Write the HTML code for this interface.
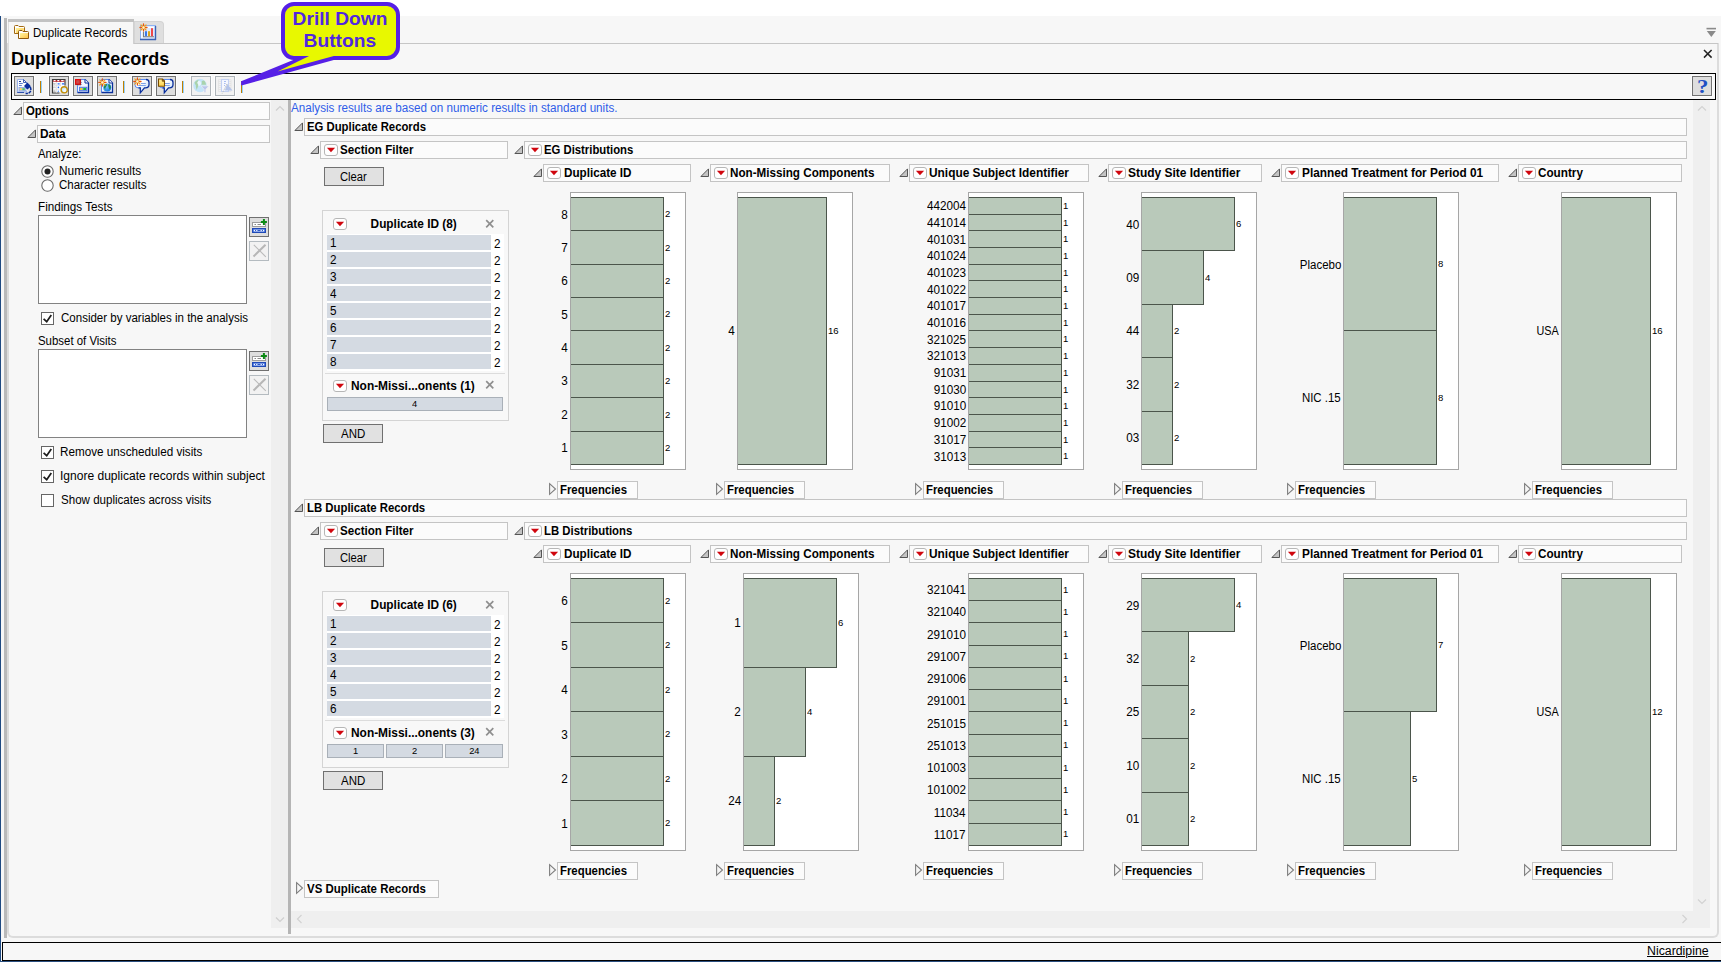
<!DOCTYPE html>
<html><head><meta charset="utf-8"><title>Duplicate Records</title>
<style>
html,body{margin:0;padding:0;}
body{width:1721px;height:962px;position:relative;overflow:hidden;background:#fff;font-family:"Liberation Sans", sans-serif;}
.a{position:absolute;box-sizing:content-box;}
.t{position:absolute;white-space:nowrap;display:inline-block;}
svg.a{overflow:visible;}
</style></head><body>
<div class="a" style="left:0px;top:0px;width:1721px;height:16px;background:#fff;"></div><div class="a" style="left:0px;top:16px;width:1721px;height:946px;background:#f7f7f7;"></div><div class="a" style="left:0px;top:16px;width:1px;height:946px;background:#1f4a82;"></div><div class="a" style="left:0px;top:961px;width:1721px;height:1px;background:#2a4f80;"></div><div class="a" style="left:4px;top:18px;width:3px;height:920px;background:#b9b9b9;"></div><div class="a" style="left:7px;top:43px;width:1712px;height:895px;border:2px solid #dcdcdc;border-top:none;border-radius:0 0 6px 6px;box-sizing:border-box"></div><div class="a" style="left:134px;top:43px;width:1584px;height:1px;background:#c6c6c6;"></div><div class="a" style="left:8px;top:19px;width:126px;height:3px;background:#c2c2c2;"></div><div class="a" style="left:8px;top:22px;width:1px;height:21px;background:#dedede;"></div><div class="a" style="left:133px;top:22px;width:1px;height:22px;background:#d0d0d0;"></div><div class="a" style="left:134px;top:21px;width:30px;height:22px;background:#dfdfdf;border:1px solid #d4d4d4;border-bottom:none;border-radius:0 4px 0 0;box-sizing:border-box"></div><span class="t" style="left:32.70px;top:26.00px;font-size:12px;line-height:14px;color:#000;transform:scaleX(0.9618);transform-origin:left center;">Duplicate Records</span><span class="t" style="left:10.90px;top:49.00px;font-size:18.2px;line-height:20px;color:#000;font-weight:bold;transform:scaleX(0.9912);transform-origin:left center;">Duplicate Records</span><svg class="a" style="left:1706px;top:27px" width="11" height="11" viewBox="0 0 11 11"><rect x="0.5" y="0.8" width="9.5" height="1.6" fill="#8a8a8a"/><path d="M0.8 4 L9.8 4 L5.3 10 Z" fill="#8a8a8a"/></svg><svg class="a" style="left:1703px;top:49px" width="10" height="10" viewBox="0 0 10 10"><path d="M1 1 L8.6 8.6 M8.6 1 L1 8.6" stroke="#222" stroke-width="1.5" fill="none"/></svg><div class="a" style="left:11px;top:73px;width:1703px;height:25px;border:1px solid #000;"></div><div class="a" style="left:14px;top:76px;width:18px;height:18px;background:#dedede;border:1px solid #727272;box-shadow:0 0 0 1px #fdfdfd;"></div><div class="a" style="left:49px;top:76px;width:18px;height:18px;background:#dedede;border:1px solid #727272;box-shadow:0 0 0 1px #fdfdfd;"></div><div class="a" style="left:73px;top:76px;width:18px;height:18px;background:#dedede;border:1px solid #727272;box-shadow:0 0 0 1px #fdfdfd;"></div><div class="a" style="left:97px;top:76px;width:18px;height:18px;background:#dedede;border:1px solid #727272;box-shadow:0 0 0 1px #fdfdfd;"></div><div class="a" style="left:132px;top:76px;width:18px;height:18px;background:#dedede;border:1px solid #727272;box-shadow:0 0 0 1px #fdfdfd;"></div><div class="a" style="left:156px;top:76px;width:18px;height:18px;background:#dedede;border:1px solid #727272;box-shadow:0 0 0 1px #fdfdfd;"></div><div class="a" style="left:191px;top:76px;width:18px;height:18px;background:#f2f2f2;border:1px solid #aeb4b9;box-shadow:0 0 0 1px #fdfdfd;"></div><div class="a" style="left:215px;top:76px;width:18px;height:18px;background:#f2f2f2;border:1px solid #aeb4b9;box-shadow:0 0 0 1px #fdfdfd;"></div><div class="a" style="left:40px;top:81px;width:1px;height:12px;background:#c17f00;"></div><div class="a" style="left:41px;top:81px;width:1px;height:12px;background:#8fd0ff;"></div><div class="a" style="left:123px;top:81px;width:1px;height:12px;background:#c17f00;"></div><div class="a" style="left:124px;top:81px;width:1px;height:12px;background:#8fd0ff;"></div><div class="a" style="left:182px;top:81px;width:1px;height:12px;background:#c17f00;"></div><div class="a" style="left:183px;top:81px;width:1px;height:12px;background:#8fd0ff;"></div><div class="a" style="left:241px;top:81px;width:1px;height:12px;background:#c17f00;"></div><div class="a" style="left:242px;top:81px;width:1px;height:12px;background:#8fd0ff;"></div><div class="a" style="left:1692px;top:76px;width:18px;height:18px;background:#dedede;border:1px solid #727272;box-shadow:0 0 0 1px #fdfdfd;"></div><svg class="a" style="left:13px;top:24px" width="18" height="16" viewBox="0 0 18 16"><defs><linearGradient id="fg" x1="0" y1="0" x2="1" y2="1"><stop offset="0" stop-color="#fff7a0"/><stop offset="1" stop-color="#ffc24a"/></linearGradient></defs><path d="M1.5 9.5 V2.5 Q1.5 1.5 2.5 1.5 H5 L6 2.5 H10.5 Q11.5 2.5 11.5 3.5 V9.5 Z" fill="#fff" stroke="#a36a12" stroke-width="1"/><rect x="2.8" y="4" width="8" height="5" fill="url(#fg)"/><path d="M5.5 14.5 V7.5 Q5.5 6.5 6.5 6.5 H9 L10 7.5 H14.5 Q15.5 7.5 15.5 8.5 V14.5 Z" fill="#fff" stroke="#8f5a0c" stroke-width="1"/><rect x="7" y="9" width="8" height="5" fill="url(#fg)"/></svg><svg class="a" style="left:139px;top:22px" width="20" height="20" viewBox="0 0 20 20"><rect x="1.5" y="3.5" width="15" height="14" fill="#dfeaff" stroke="#8eb2f2" stroke-width="1"/><path d="M1 17.5 H17 M16.5 4 V18" stroke="#3a62b4" stroke-width="1.4" fill="none"/><rect x="2.5" y="4.8" width="12.5" height="1.2" fill="#fff"/><rect x="2.3" y="5" width="1.2" height="11" fill="#fff"/><path d="M4.5 10 V14.7 H15" stroke="#7d7d7d" stroke-width="1.1" fill="none"/><rect x="6" y="9.2" width="2" height="5" fill="#3a78e8"/><rect x="9" y="9.2" width="2" height="5" fill="#d8a41a"/><rect x="12" y="6.2" width="2" height="8" fill="#f04848"/><path d="M4.5 2.0 V9.0 M1.0 5.5 H8.0" stroke="#e8590c" stroke-width="1.3" stroke-linecap="round"/><path d="M1.98 2.98 L7.02 8.02 M7.02 2.98 L1.98 8.02" stroke="#f0a21a" stroke-width="1.2" stroke-linecap="round"/><circle cx="4.5" cy="5.5" r="1.2" fill="#fff3d0"/></svg><svg class="a" style="left:14px;top:76px" width="20" height="20" viewBox="0 0 20 20"><path d="M3.5 3.5 H9.5 L12.5 6.5 V16 H3.5 Z" fill="#fafcff" stroke="#9db4ea" stroke-width="1"/><path d="M9.5 3.5 V6.5 H12.5 Z" fill="#fff" stroke="#2a4fae" stroke-width="0.9"/><path d="M5 5.5 H7" stroke="#1f3f9c" stroke-width="1"/><path d="M5 7.5 H8.8 M5 9.5 H7.8" stroke="#5d7fcc" stroke-width="1"/><rect x="5" y="11.4" width="6.5" height="3.6" fill="#b9caf2" stroke="#8aa4e2" stroke-width="0.8"/><rect x="5.8" y="12.2" width="2" height="2" fill="#ffd84a"/><rect x="8.4" y="12.2" width="2.4" height="2" fill="#56c060"/><path d="M3.2 16.5 H10" stroke="#2a4fae" stroke-width="1"/><path d="M10 10 L13.4 6.6 L16.3 9.6 L16.3 11 L13.4 13.4 Z" fill="#0a2f9c"/><path d="M16.2 10.8 Q17.6 14.2 16 16 Q14.4 17.6 11.6 17.4" fill="none" stroke="#0a2f9c" stroke-width="1.5" stroke-dasharray="3.2 0.8"/><path d="M11.6 13.2 L14.4 15.6" stroke="#fff" stroke-width="0.9"/></svg><svg class="a" style="left:49px;top:76px" width="20" height="20" viewBox="0 0 20 20"><rect x="3.5" y="3.5" width="12.5" height="13.5" fill="#fff" stroke="#d6d6d6" stroke-width="0.8"/><path d="M3.5 3 V17 H10.5" fill="none" stroke="#3c3c3c" stroke-width="1.2"/><path d="M3 3.5 H16 V9.5" fill="none" stroke="#3c3c3c" stroke-width="1.1"/><rect x="4.2" y="4" width="11.3" height="1.9" fill="#b4242c"/><path d="M4.8 4 V5.2 H6.6 V4 M8.3 4 V5.2 H10.3 V4 M12.2 4 V5.2 H14.6 V4" fill="#fff" stroke="none"/><path d="M7.4 6 V17 M11.4 6 V10" stroke="#d9d9d9" stroke-width="0.7"/><path d="M4 9.6 H12 M4 13.2 H10.5" stroke="#d9d9d9" stroke-width="0.7"/><path d="M4.6 7.8 H6.3 M4.6 11.4 H6.3 M4.6 15.2 H6.3" stroke="#8c8c8c" stroke-width="1.4"/><path d="M4.9 7.8 H6 M4.9 11.4 H6 M4.9 15.2 H6" stroke="#fff" stroke-width="0.7"/><path d="M8.6 7.8 H10.6 M12.9 7.8 H15.2" stroke="#1a68ff" stroke-width="1.3"/><circle cx="9.4" cy="11.4" r="0.8" fill="#1a68ff"/><circle cx="9.3" cy="15.2" r="0.7" fill="#4a8cff"/><circle cx="15.2" cy="13.8" r="3.1" fill="#c9ecff" stroke="#c48f08" stroke-width="1.4"/><circle cx="15.8" cy="14.5" r="1.5" fill="#fff" opacity="0.85"/></svg><svg class="a" style="left:73px;top:76px" width="20" height="20" viewBox="0 0 20 20"><path d="M4.5 3.5 H12.0 L15.5 7.0 V16.5 H4.5 Z" fill="#f4f7ff" stroke="none"/><path d="M4.5 16.5 V3.5 H12.0" fill="none" stroke="#5c8cf0" stroke-width="1"/><path d="M12.0 3.5 L15.5 7.0 V16.5 H4.5" fill="none" stroke="#0a2f9c" stroke-width="1.3"/><path d="M12.0 3.5 V7.0 H15.5" fill="#fff" stroke="#0a2f9c" stroke-width="1"/><rect x="6.5" y="11.2" width="7.5" height="3.6" fill="#7fa0ee" stroke="#4a72d8" stroke-width="0.8"/><rect x="7.3" y="12" width="2" height="2" fill="#ffd21a"/><rect x="10.4" y="12" width="2.6" height="2" fill="#16c02a"/><path d="M8.5 6 V9.5 M4.6 9.6 H8.5" stroke="#9ab0e0" stroke-width="1" stroke-dasharray="1 1"/><rect x="2.6" y="3.6" width="4.6" height="4.6" fill="#c84a4a" stroke="#e60a0a" stroke-width="1.2"/><path d="M2.2 8.6 H7.8 M7.6 3.2 V8.8" stroke="#a00a0a" stroke-width="0.7"/></svg><svg class="a" style="left:97px;top:76px" width="20" height="20" viewBox="0 0 20 20"><path d="M4.5 3.5 H12.0 L15.5 7.0 V16.5 H4.5 Z" fill="#f4f7ff" stroke="none"/><path d="M4.5 16.5 V3.5 H12.0" fill="none" stroke="#5c8cf0" stroke-width="1"/><path d="M12.0 3.5 L15.5 7.0 V16.5 H4.5" fill="none" stroke="#0a2f9c" stroke-width="1.3"/><path d="M12.0 3.5 V7.0 H15.5" fill="#fff" stroke="#0a2f9c" stroke-width="1"/><defs><radialGradient id="gl" cx="0.35" cy="0.35" r="0.8"><stop offset="0" stop-color="#7fd0ff"/><stop offset="1" stop-color="#0a6fdc"/></radialGradient></defs><circle cx="10.2" cy="11.4" r="4" fill="url(#gl)"/><path d="M7.5 9.1 Q9 7.6 10 8.2 Q9.9 10.1 8.7 11.2 Q7.9 12.4 8.5 13.8 Q7.1 12.6 6.9 11.2 Z M11.5 8 Q13.7 8.8 14 11.2 Q13.5 13.2 12.1 13.6 Q12.5 12 11.5 11 Q11.1 9.4 11.5 8 Z" fill="#1d8a4e"/><path d="M5.4 2.8000000000000003 V10.0 M1.8000000000000003 6.4 H9.0" stroke="#e8590c" stroke-width="1.3" stroke-linecap="round"/><path d="M2.8080000000000003 3.8080000000000003 L7.992000000000001 8.992 M7.992000000000001 3.8080000000000003 L2.8080000000000003 8.992" stroke="#f0a21a" stroke-width="1.2" stroke-linecap="round"/><circle cx="5.4" cy="6.4" r="1.2" fill="#fff3d0"/></svg><svg class="a" style="left:132px;top:76px" width="20" height="20" viewBox="0 0 20 20"><defs><linearGradient id="bg1" x1="0" y1="0" x2="1" y2="1"><stop offset="0.35" stop-color="#fff"/><stop offset="1" stop-color="#b8d6f6"/></linearGradient></defs><path d="M6 3.5 H14 Q17 3.5 17 6.5 V8.5 Q17 11.8 13.5 11.8 H12.5 L8.3 16.6 V11.8 H6 Q3 11.8 3 8.8 V6.5 Q3 3.5 6 3.5 Z" fill="url(#bg1)" stroke="none"/><path d="M8.3 11.8 H6 Q3 11.8 3 8.8 V6.5 Q3 3.5 6 3.5 H14" fill="none" stroke="#5a8af0" stroke-width="1"/><path d="M14 3.5 Q17 3.5 17 6.5 V8.5 Q17 11.8 13.5 11.8 H12.5 L8.3 16.8 V11.8 H6.5" fill="none" stroke="#0a2f9c" stroke-width="1.3"/><path d="M9 7.5 H13.8 M6.2 9.5 H13.8" stroke="#7ea2ea" stroke-width="1"/><path d="M5.4 1.9 V9.1 M1.8000000000000003 5.5 H9.0" stroke="#e8590c" stroke-width="1.3" stroke-linecap="round"/><path d="M2.8080000000000003 2.908 L7.992000000000001 8.092 M7.992000000000001 2.908 L2.8080000000000003 8.092" stroke="#f0a21a" stroke-width="1.2" stroke-linecap="round"/><circle cx="5.4" cy="5.5" r="1.2" fill="#fff3d0"/></svg><svg class="a" style="left:156px;top:76px" width="20" height="20" viewBox="0 0 20 20"><defs><linearGradient id="bg1" x1="0" y1="0" x2="1" y2="1"><stop offset="0.35" stop-color="#fff"/><stop offset="1" stop-color="#b8d6f6"/></linearGradient></defs><path d="M6 3.5 H14 Q17 3.5 17 6.5 V8.5 Q17 11.8 13.5 11.8 H12.5 L8.3 16.6 V11.8 H6 Q3 11.8 3 8.8 V6.5 Q3 3.5 6 3.5 Z" fill="url(#bg1)" stroke="none"/><path d="M8.3 11.8 H6 Q3 11.8 3 8.8 V6.5 Q3 3.5 6 3.5 H14" fill="none" stroke="#5a8af0" stroke-width="1"/><path d="M14 3.5 Q17 3.5 17 6.5 V8.5 Q17 11.8 13.5 11.8 H12.5 L8.3 16.8 V11.8 H6.5" fill="none" stroke="#0a2f9c" stroke-width="1.3"/><path d="M9 7.5 H13.8 M6.2 9.5 H13.8" stroke="#7ea2ea" stroke-width="1"/><defs><linearGradient id="ng" x1="0" y1="0" x2="0" y2="1"><stop offset="0" stop-color="#fff2a0"/><stop offset="1" stop-color="#ffd24a"/></linearGradient></defs><path d="M2.5 3 H6.5 L8.5 5 V10.2 H2.5 Z" fill="url(#ng)" stroke="#7a4c00" stroke-width="1.1"/><path d="M6.3 3 V5.2 H8.5" fill="none" stroke="#7a4c00" stroke-width="1"/></svg><svg class="a" style="left:191px;top:76px" width="20" height="20" viewBox="0 0 20 20"><g transform="translate(0.4,-1.3)"><circle cx="8.6" cy="10.8" r="6.8" fill="#c4e4f8"/><circle cx="7" cy="8.6" r="2.6" fill="#eaf6fd"/><path d="M3.2 7.5 Q5 5.2 7.4 5 Q6.4 7 5.8 8 Q7.4 10 6.6 12 Q5.8 14 5.2 15.4 Q4.2 12.5 4.4 10.4 Q3.2 9.4 3.2 7.5 Z M10.2 6.8 Q12 5 13.4 6.6 Q14.6 8.4 14.6 10 H10 Q11 8.4 10.2 6.8 Z" fill="#a9d3ac"/></g><path d="M10 10 H17.8 L14.8 13.3 V16.6 H13.1 V13.3 Z" fill="#b9c5ec" stroke="#f1f1f1" stroke-width="0.6"/></svg><svg class="a" style="left:215px;top:76px" width="20" height="20" viewBox="0 0 20 20"><path d="M3.5 3.5 H16 V15.5 H3.5 Z M3.5 5.5 H16 M3.5 7.5 H16 M3.5 9.5 H16 M3.5 11.5 H16 M3.5 13.5 H16" fill="none" stroke="#e2e2e2" stroke-width="0.8"/><rect x="6.5" y="3.5" width="7" height="12" fill="#f6f8ff" stroke="#c2d0f2" stroke-width="1.1"/><path d="M9 5.5 H11 M9 7.5 H10.6 M9 9.5 H10" stroke="#a9bdf0" stroke-width="1"/><path d="M12.2 8 L17.5 14.5 H9.8 Z" fill="#b4c4ea"/><path d="M12 8 L7.2 17.5" stroke="#bdbdbd" stroke-width="1" stroke-dasharray="1.5 1"/></svg><span class="t" style="left:1697.55px;top:76.00px;font-size:19px;line-height:21px;color:#1f50c4;font-weight:bold;font-family:'Liberation Serif', serif;transform:scaleX(1.2000);transform-origin:center center;">?</span><div class="a" style="left:271px;top:100px;width:17px;height:828px;background:#efefef;"></div><svg class="a" style="left:275px;top:104px" width="10" height="8" viewBox="0 0 10 8"><path d="M1 6.5 L5 2.5 L9 6.5" stroke="#cfcfcf" stroke-width="1.2" fill="none"/></svg><svg class="a" style="left:275px;top:916px" width="10" height="8" viewBox="0 0 10 8"><path d="M1 1.5 L5 5.5 L9 1.5" stroke="#cfcfcf" stroke-width="1.2" fill="none"/></svg><div class="a" style="left:288px;top:100px;width:3px;height:834px;background:#b5b5b5;"></div><svg class="a" style="left:13px;top:106px" width="10" height="10" viewBox="0 0 10 10"><path d="M0.9 8.5 L8.5 8.5 L8.5 0.9 Z" fill="#c4c4c4" stroke="#555" stroke-width="1" stroke-linejoin="miter"/></svg><div class="a" style="left:23px;top:102px;width:245px;height:16px;background:#fbfbfb;border:1px solid #c4c4c4;"></div><span class="t" style="left:25.70px;top:104.00px;font-size:12px;line-height:14px;color:#000;font-weight:bold;transform:scaleX(0.9464);transform-origin:left center;">Options</span><svg class="a" style="left:27px;top:129px" width="10" height="10" viewBox="0 0 10 10"><path d="M0.9 8.5 L8.5 8.5 L8.5 0.9 Z" fill="#c4c4c4" stroke="#555" stroke-width="1" stroke-linejoin="miter"/></svg><div class="a" style="left:37px;top:125px;width:231px;height:16px;background:#fbfbfb;border:1px solid #c4c4c4;"></div><span class="t" style="left:40.40px;top:127.00px;font-size:12px;line-height:14px;color:#000;font-weight:bold;transform:scaleX(0.9879);transform-origin:left center;">Data</span><span class="t" style="left:38.20px;top:147.00px;font-size:12px;line-height:14px;color:#000;transform:scaleX(0.9428);transform-origin:left center;">Analyze:</span><svg class="a" style="left:40.5px;top:164.5px" width="13" height="13" viewBox="0 0 13 13"><circle cx="6.5" cy="6.5" r="5.7" fill="#fff" stroke="#666" stroke-width="1.05"/><circle cx="6.5" cy="6.5" r="3" fill="#222"/></svg><span class="t" style="left:59.40px;top:164.00px;font-size:12px;line-height:14px;color:#000;transform:scaleX(0.9861);transform-origin:left center;">Numeric results</span><svg class="a" style="left:40.5px;top:178.5px" width="13" height="13" viewBox="0 0 13 13"><circle cx="6.5" cy="6.5" r="5.7" fill="#fff" stroke="#666" stroke-width="1.05"/></svg><span class="t" style="left:59.40px;top:178.00px;font-size:12px;line-height:14px;color:#000;transform:scaleX(0.9576);transform-origin:left center;">Character results</span><span class="t" style="left:37.50px;top:200.00px;font-size:12px;line-height:14px;color:#000;transform:scaleX(0.9741);transform-origin:left center;">Findings Tests</span><div class="a" style="left:38px;top:215px;width:207px;height:87px;background:#fff;border:1px solid #828282;"></div><span class="t" style="left:38.20px;top:334.00px;font-size:12px;line-height:14px;color:#000;transform:scaleX(0.9515);transform-origin:left center;">Subset of Visits</span><div class="a" style="left:38px;top:349px;width:207px;height:87px;background:#fff;border:1px solid #828282;"></div><div class="a" style="left:249px;top:217px;width:18px;height:18px;background:#dedede;border:1px solid #707070;"></div><svg class="a" style="left:249px;top:217px" width="20" height="20" viewBox="0 0 20 20"><rect x="3.5" y="5.5" width="13" height="4" fill="#fff" stroke="#9c9c9c" stroke-width="1"/><path d="M5.5 7.5 H7 M8.5 7.5 H12" stroke="#8a8a8a" stroke-width="1"/><rect x="3.5" y="11.5" width="13" height="4" fill="#3d6cdc" stroke="#1f49b6" stroke-width="1"/><rect x="4.8" y="12.7" width="10.4" height="1.7" fill="#fff"/><path d="M6 13.5 H7.2 M8.4 13.5 H11.6 M12.8 13.5 H14" stroke="#2a58c8" stroke-width="1"/><path d="M14.9 2 V8 M11.9 5 H17.9" stroke="#0b8a14" stroke-width="2"/></svg><div class="a" style="left:249px;top:241px;width:18px;height:18px;background:#f2f2f2;border:1px solid #b4bbc0;"></div><svg class="a" style="left:249px;top:241px" width="20" height="20" viewBox="0 0 20 20"><path d="M4.5 15.5 L16.5 3.8" stroke="#b6b6b6" stroke-width="2" fill="none"/><path d="M4.8 3.8 L16.8 15.8" stroke="#b9b9b9" stroke-width="1.1" fill="none"/></svg><div class="a" style="left:249px;top:351px;width:18px;height:18px;background:#dedede;border:1px solid #707070;"></div><svg class="a" style="left:249px;top:351px" width="20" height="20" viewBox="0 0 20 20"><rect x="3.5" y="5.5" width="13" height="4" fill="#fff" stroke="#9c9c9c" stroke-width="1"/><path d="M5.5 7.5 H7 M8.5 7.5 H12" stroke="#8a8a8a" stroke-width="1"/><rect x="3.5" y="11.5" width="13" height="4" fill="#3d6cdc" stroke="#1f49b6" stroke-width="1"/><rect x="4.8" y="12.7" width="10.4" height="1.7" fill="#fff"/><path d="M6 13.5 H7.2 M8.4 13.5 H11.6 M12.8 13.5 H14" stroke="#2a58c8" stroke-width="1"/><path d="M14.9 2 V8 M11.9 5 H17.9" stroke="#0b8a14" stroke-width="2"/></svg><div class="a" style="left:249px;top:375px;width:18px;height:18px;background:#f2f2f2;border:1px solid #b4bbc0;"></div><svg class="a" style="left:249px;top:375px" width="20" height="20" viewBox="0 0 20 20"><path d="M4.5 15.5 L16.5 3.8" stroke="#b6b6b6" stroke-width="2" fill="none"/><path d="M4.8 3.8 L16.8 15.8" stroke="#b9b9b9" stroke-width="1.1" fill="none"/></svg><div class="a" style="left:41px;top:312px;width:11px;height:11px;background:#fff;border:1px solid #666;"></div><svg class="a" style="left:41px;top:312px" width="13" height="13" viewBox="0 0 13 13"><path d="M2.6 6.9 L5.7 9.7 L10.3 2.9" stroke="#1c1c1c" stroke-width="1.7" fill="none"/></svg><span class="t" style="left:60.60px;top:311.00px;font-size:12px;line-height:14px;color:#000;transform:scaleX(0.9601);transform-origin:left center;">Consider by variables in the analysis</span><div class="a" style="left:41px;top:446px;width:11px;height:11px;background:#fff;border:1px solid #666;"></div><svg class="a" style="left:41px;top:446px" width="13" height="13" viewBox="0 0 13 13"><path d="M2.6 6.9 L5.7 9.7 L10.3 2.9" stroke="#1c1c1c" stroke-width="1.7" fill="none"/></svg><span class="t" style="left:59.60px;top:445.00px;font-size:12px;line-height:14px;color:#000;transform:scaleX(0.9748);transform-origin:left center;">Remove unscheduled visits</span><div class="a" style="left:41px;top:470px;width:11px;height:11px;background:#fff;border:1px solid #666;"></div><svg class="a" style="left:41px;top:470px" width="13" height="13" viewBox="0 0 13 13"><path d="M2.6 6.9 L5.7 9.7 L10.3 2.9" stroke="#1c1c1c" stroke-width="1.7" fill="none"/></svg><span class="t" style="left:59.60px;top:469.00px;font-size:12px;line-height:14px;color:#000;transform:scaleX(1.0033);transform-origin:left center;">Ignore duplicate records within subject</span><div class="a" style="left:41px;top:494px;width:11px;height:11px;background:#fff;border:1px solid #666;"></div><span class="t" style="left:60.60px;top:493.00px;font-size:12px;line-height:14px;color:#000;transform:scaleX(0.9636);transform-origin:left center;">Show duplicates across visits</span><div class="a" style="left:1693px;top:100px;width:17px;height:828px;background:#efefef;"></div><div class="a" style="left:291px;top:911px;width:1419px;height:17px;background:#efefef;"></div><svg class="a" style="left:1697px;top:104px" width="10" height="8" viewBox="0 0 10 8"><path d="M1 6.5 L5 2.5 L9 6.5" stroke="#d2d2d2" stroke-width="1.2" fill="none"/></svg><svg class="a" style="left:1697px;top:898px" width="10" height="8" viewBox="0 0 10 8"><path d="M1 1.5 L5 5.5 L9 1.5" stroke="#d2d2d2" stroke-width="1.2" fill="none"/></svg><svg class="a" style="left:295px;top:914px" width="8" height="10" viewBox="0 0 8 10"><path d="M6.5 1 L2.5 5 L6.5 9" stroke="#d2d2d2" stroke-width="1.2" fill="none"/></svg><svg class="a" style="left:1681px;top:914px" width="8" height="10" viewBox="0 0 8 10"><path d="M1.5 1 L5.5 5 L1.5 9" stroke="#d2d2d2" stroke-width="1.2" fill="none"/></svg><span class="t" style="left:291.00px;top:101.00px;font-size:12px;line-height:14px;color:#2f5de8;transform:scaleX(0.9712);transform-origin:left center;">Analysis results are based on numeric results in standard units.</span><svg class="a" style="left:294px;top:122px" width="10" height="10" viewBox="0 0 10 10"><path d="M0.9 8.5 L8.5 8.5 L8.5 0.9 Z" fill="#c4c4c4" stroke="#555" stroke-width="1" stroke-linejoin="miter"/></svg><div class="a" style="left:304px;top:118px;width:1381px;height:16px;background:#fbfbfb;border:1px solid #c4c4c4;"></div><span class="t" style="left:306.80px;top:120.00px;font-size:12px;line-height:14px;color:#000;font-weight:bold;transform:scaleX(0.9441);transform-origin:left center;">EG Duplicate Records</span><svg class="a" style="left:310px;top:145px" width="10" height="10" viewBox="0 0 10 10"><path d="M0.9 8.5 L8.5 8.5 L8.5 0.9 Z" fill="#c4c4c4" stroke="#555" stroke-width="1" stroke-linejoin="miter"/></svg><div class="a" style="left:320px;top:141px;width:186px;height:16px;background:#fbfbfb;border:1px solid #c4c4c4;"></div><div class="a" style="left:324px;top:144px;width:14px;height:12px;background:#fff;border:1px solid #b6b6b6;border-radius:3px;box-sizing:border-box"></div><svg class="a" style="left:324px;top:144px" width="14" height="12" viewBox="0 0 14 12"><path d="M2.9000000000000004 3.8 L11.1 3.8 L7.0 8.3 Z" fill="#d0060e"/></svg><span class="t" style="left:340.20px;top:143.00px;font-size:12px;line-height:14px;color:#000;font-weight:bold;transform:scaleX(0.9669);transform-origin:left center;">Section Filter</span><svg class="a" style="left:514px;top:145px" width="10" height="10" viewBox="0 0 10 10"><path d="M0.9 8.5 L8.5 8.5 L8.5 0.9 Z" fill="#c4c4c4" stroke="#555" stroke-width="1" stroke-linejoin="miter"/></svg><div class="a" style="left:524px;top:141px;width:1161px;height:16px;background:#fbfbfb;border:1px solid #c4c4c4;"></div><div class="a" style="left:528px;top:144px;width:14px;height:12px;background:#fff;border:1px solid #b6b6b6;border-radius:3px;box-sizing:border-box"></div><svg class="a" style="left:528px;top:144px" width="14" height="12" viewBox="0 0 14 12"><path d="M2.9000000000000004 3.8 L11.1 3.8 L7.0 8.3 Z" fill="#d0060e"/></svg><span class="t" style="left:543.80px;top:143.00px;font-size:12px;line-height:14px;color:#000;font-weight:bold;transform:scaleX(0.9427);transform-origin:left center;">EG Distributions</span><div class="a" style="left:324px;top:167px;width:58px;height:17px;background:#e1e1e1;border:1px solid #707070;"></div><span class="t" style="left:340.20px;top:170.00px;font-size:12px;line-height:14px;color:#000;transform:scaleX(0.9342);transform-origin:left center;">Clear</span><div class="a" style="left:322px;top:210px;width:185px;height:209px;background:#f8f8f8;border:1px solid #d4d4d4;"></div><div class="a" style="left:333px;top:218px;width:14px;height:12px;background:#fff;border:1px solid #b6b6b6;border-radius:3px;box-sizing:border-box"></div><svg class="a" style="left:333px;top:218px" width="14" height="12" viewBox="0 0 14 12"><path d="M2.9000000000000004 3.8 L11.1 3.8 L7.0 8.3 Z" fill="#d0060e"/></svg><span class="t" style="left:370.02px;top:217.00px;font-size:12px;line-height:14px;color:#000;font-weight:bold;transform:scaleX(0.9867);transform-origin:center center;">Duplicate ID (8)</span><svg class="a" style="left:485px;top:218.5px" width="10" height="10" viewBox="0 0 10 10"><path d="M1.2 1.2 L8.3 8.3 M8.3 1.2 L1.2 8.3" stroke="#8f8f8f" stroke-width="1.7" fill="none"/></svg><div class="a" style="left:327px;top:234px;width:177px;height:137px;background:#fff;"></div><div class="a" style="left:327px;top:235px;width:164px;height:15px;background:#d4dae2;"></div><span class="t" style="left:330.00px;top:236.00px;font-size:12px;line-height:14px;color:#000;transform:scaleX(0.9750);transform-origin:left center;">1</span><span class="t" style="left:494.30px;top:237.00px;font-size:12px;line-height:14px;color:#000;transform:scaleX(0.9750);transform-origin:left center;">2</span><div class="a" style="left:327px;top:252px;width:164px;height:15px;background:#d4dae2;"></div><span class="t" style="left:330.00px;top:253.00px;font-size:12px;line-height:14px;color:#000;transform:scaleX(0.9750);transform-origin:left center;">2</span><span class="t" style="left:494.30px;top:254.00px;font-size:12px;line-height:14px;color:#000;transform:scaleX(0.9750);transform-origin:left center;">2</span><div class="a" style="left:327px;top:269px;width:164px;height:15px;background:#d4dae2;"></div><span class="t" style="left:330.00px;top:270.00px;font-size:12px;line-height:14px;color:#000;transform:scaleX(0.9750);transform-origin:left center;">3</span><span class="t" style="left:494.30px;top:271.00px;font-size:12px;line-height:14px;color:#000;transform:scaleX(0.9750);transform-origin:left center;">2</span><div class="a" style="left:327px;top:286px;width:164px;height:15px;background:#d4dae2;"></div><span class="t" style="left:330.00px;top:287.00px;font-size:12px;line-height:14px;color:#000;transform:scaleX(0.9750);transform-origin:left center;">4</span><span class="t" style="left:494.30px;top:288.00px;font-size:12px;line-height:14px;color:#000;transform:scaleX(0.9750);transform-origin:left center;">2</span><div class="a" style="left:327px;top:303px;width:164px;height:15px;background:#d4dae2;"></div><span class="t" style="left:330.00px;top:304.00px;font-size:12px;line-height:14px;color:#000;transform:scaleX(0.9750);transform-origin:left center;">5</span><span class="t" style="left:494.30px;top:305.00px;font-size:12px;line-height:14px;color:#000;transform:scaleX(0.9750);transform-origin:left center;">2</span><div class="a" style="left:327px;top:320px;width:164px;height:15px;background:#d4dae2;"></div><span class="t" style="left:330.00px;top:321.00px;font-size:12px;line-height:14px;color:#000;transform:scaleX(0.9750);transform-origin:left center;">6</span><span class="t" style="left:494.30px;top:322.00px;font-size:12px;line-height:14px;color:#000;transform:scaleX(0.9750);transform-origin:left center;">2</span><div class="a" style="left:327px;top:337px;width:164px;height:15px;background:#d4dae2;"></div><span class="t" style="left:330.00px;top:338.00px;font-size:12px;line-height:14px;color:#000;transform:scaleX(0.9750);transform-origin:left center;">7</span><span class="t" style="left:494.30px;top:339.00px;font-size:12px;line-height:14px;color:#000;transform:scaleX(0.9750);transform-origin:left center;">2</span><div class="a" style="left:327px;top:354px;width:164px;height:15px;background:#d4dae2;"></div><span class="t" style="left:330.00px;top:355.00px;font-size:12px;line-height:14px;color:#000;transform:scaleX(0.9750);transform-origin:left center;">8</span><span class="t" style="left:494.30px;top:356.00px;font-size:12px;line-height:14px;color:#000;transform:scaleX(0.9750);transform-origin:left center;">2</span><div class="a" style="left:325px;top:373px;width:180px;height:1px;background:#dcdcdc;"></div><div class="a" style="left:333px;top:380px;width:14px;height:12px;background:#fff;border:1px solid #b6b6b6;border-radius:3px;box-sizing:border-box"></div><svg class="a" style="left:333px;top:380px" width="14" height="12" viewBox="0 0 14 12"><path d="M2.9000000000000004 3.8 L11.1 3.8 L7.0 8.3 Z" fill="#d0060e"/></svg><span class="t" style="left:351.30px;top:379.00px;font-size:12px;line-height:14px;color:#000;font-weight:bold;transform:scaleX(0.9926);transform-origin:left center;">Non-Missi...onents (1)</span><svg class="a" style="left:485px;top:380px" width="10" height="10" viewBox="0 0 10 10"><path d="M1.2 1.2 L8.3 8.3 M8.3 1.2 L1.2 8.3" stroke="#8f8f8f" stroke-width="1.7" fill="none"/></svg><div class="a" style="left:327px;top:397px;width:174px;height:12px;background:#d4dae2;border:1px solid #a9b0b8;"></div><span class="t" style="left:412.33px;top:398.00px;font-size:9.6px;line-height:11px;color:#000;transform:scaleX(0.9750);transform-origin:center center;">4</span><div class="a" style="left:323px;top:424px;width:58px;height:17px;background:#e1e1e1;border:1px solid #707070;"></div><span class="t" style="left:341.30px;top:427.00px;font-size:12px;line-height:14px;color:#000;transform:scaleX(0.9588);transform-origin:left center;">AND</span><svg class="a" style="left:533px;top:168px" width="10" height="10" viewBox="0 0 10 10"><path d="M0.9 8.5 L8.5 8.5 L8.5 0.9 Z" fill="#c4c4c4" stroke="#555" stroke-width="1" stroke-linejoin="miter"/></svg><div class="a" style="left:543px;top:164px;width:146px;height:16px;background:#fbfbfb;border:1px solid #c4c4c4;"></div><div class="a" style="left:547px;top:167px;width:14px;height:12px;background:#fff;border:1px solid #b6b6b6;border-radius:3px;box-sizing:border-box"></div><svg class="a" style="left:547px;top:167px" width="14" height="12" viewBox="0 0 14 12"><path d="M2.9000000000000004 3.8 L11.1 3.8 L7.0 8.3 Z" fill="#d0060e"/></svg><span class="t" style="left:563.60px;top:166.00px;font-size:12px;line-height:14px;color:#000;font-weight:bold;transform:scaleX(0.9732);transform-origin:left center;">Duplicate ID</span><div class="a" style="left:570px;top:192px;width:116px;height:278px;background:#fff;"></div><div class="a" style="left:570px;top:197px;width:92px;height:32px;background:#b9c9ba;border:1px solid #4b554b;"></div><span class="t" style="left:561.21px;top:208.00px;font-size:12px;line-height:14px;color:#000;transform:scaleX(0.9750);transform-origin:right center;">8</span><span class="t" style="left:665.20px;top:208.00px;font-size:9.8px;line-height:11px;color:#000;transform:scaleX(0.9750);transform-origin:left center;">2</span><div class="a" style="left:570px;top:230px;width:92px;height:33px;background:#b9c9ba;border:1px solid #4b554b;"></div><span class="t" style="left:561.21px;top:241.00px;font-size:12px;line-height:14px;color:#000;transform:scaleX(0.9750);transform-origin:right center;">7</span><span class="t" style="left:665.20px;top:242.00px;font-size:9.8px;line-height:11px;color:#000;transform:scaleX(0.9750);transform-origin:left center;">2</span><div class="a" style="left:570px;top:264px;width:92px;height:32px;background:#b9c9ba;border:1px solid #4b554b;"></div><span class="t" style="left:561.21px;top:274.00px;font-size:12px;line-height:14px;color:#000;transform:scaleX(0.9750);transform-origin:right center;">6</span><span class="t" style="left:665.20px;top:275.00px;font-size:9.8px;line-height:11px;color:#000;transform:scaleX(0.9750);transform-origin:left center;">2</span><div class="a" style="left:570px;top:297px;width:92px;height:32px;background:#b9c9ba;border:1px solid #4b554b;"></div><span class="t" style="left:561.21px;top:308.00px;font-size:12px;line-height:14px;color:#000;transform:scaleX(0.9750);transform-origin:right center;">5</span><span class="t" style="left:665.20px;top:308.00px;font-size:9.8px;line-height:11px;color:#000;transform:scaleX(0.9750);transform-origin:left center;">2</span><div class="a" style="left:570px;top:330px;width:92px;height:33px;background:#b9c9ba;border:1px solid #4b554b;"></div><span class="t" style="left:561.21px;top:341.00px;font-size:12px;line-height:14px;color:#000;transform:scaleX(0.9750);transform-origin:right center;">4</span><span class="t" style="left:665.20px;top:342.00px;font-size:9.8px;line-height:11px;color:#000;transform:scaleX(0.9750);transform-origin:left center;">2</span><div class="a" style="left:570px;top:364px;width:92px;height:32px;background:#b9c9ba;border:1px solid #4b554b;"></div><span class="t" style="left:561.21px;top:374.00px;font-size:12px;line-height:14px;color:#000;transform:scaleX(0.9750);transform-origin:right center;">3</span><span class="t" style="left:665.20px;top:375.00px;font-size:9.8px;line-height:11px;color:#000;transform:scaleX(0.9750);transform-origin:left center;">2</span><div class="a" style="left:570px;top:397px;width:92px;height:33px;background:#b9c9ba;border:1px solid #4b554b;"></div><span class="t" style="left:561.21px;top:408.00px;font-size:12px;line-height:14px;color:#000;transform:scaleX(0.9750);transform-origin:right center;">2</span><span class="t" style="left:665.20px;top:409.00px;font-size:9.8px;line-height:11px;color:#000;transform:scaleX(0.9750);transform-origin:left center;">2</span><div class="a" style="left:570px;top:431px;width:92px;height:32px;background:#b9c9ba;border:1px solid #4b554b;"></div><span class="t" style="left:561.21px;top:441.00px;font-size:12px;line-height:14px;color:#000;transform:scaleX(0.9750);transform-origin:right center;">1</span><span class="t" style="left:665.20px;top:442.00px;font-size:9.8px;line-height:11px;color:#000;transform:scaleX(0.9750);transform-origin:left center;">2</span><div class="a" style="left:570px;top:192px;width:114px;height:276px;border:1px solid #a6a6a6;"></div><svg class="a" style="left:549px;top:483px" width="8" height="12" viewBox="0 0 8 12"><path d="M0.6 0.7 L6.5 6 L0.6 11.3 Z" fill="#f6f6f6" stroke="#7e7e7e" stroke-width="1.1"/></svg><div class="a" style="left:557px;top:481px;width:79px;height:16px;background:#fbfbfb;border:1px solid #c4c4c4;"></div><span class="t" style="left:560.00px;top:483.00px;font-size:12px;line-height:14px;color:#000;font-weight:bold;transform:scaleX(0.9476);transform-origin:left center;">Frequencies</span><svg class="a" style="left:700px;top:168px" width="10" height="10" viewBox="0 0 10 10"><path d="M0.9 8.5 L8.5 8.5 L8.5 0.9 Z" fill="#c4c4c4" stroke="#555" stroke-width="1" stroke-linejoin="miter"/></svg><div class="a" style="left:710px;top:164px;width:178px;height:16px;background:#fbfbfb;border:1px solid #c4c4c4;"></div><div class="a" style="left:714px;top:167px;width:14px;height:12px;background:#fff;border:1px solid #b6b6b6;border-radius:3px;box-sizing:border-box"></div><svg class="a" style="left:714px;top:167px" width="14" height="12" viewBox="0 0 14 12"><path d="M2.9000000000000004 3.8 L11.1 3.8 L7.0 8.3 Z" fill="#d0060e"/></svg><span class="t" style="left:730.30px;top:166.00px;font-size:12px;line-height:14px;color:#000;font-weight:bold;transform:scaleX(0.9719);transform-origin:left center;">Non-Missing Components</span><div class="a" style="left:737px;top:192px;width:116px;height:278px;background:#fff;"></div><div class="a" style="left:737px;top:197px;width:88px;height:266px;background:#b9c9ba;border:1px solid #4b554b;"></div><span class="t" style="left:728.21px;top:324.00px;font-size:12px;line-height:14px;color:#000;transform:scaleX(0.9750);transform-origin:right center;">4</span><span class="t" style="left:828.20px;top:325.00px;font-size:9.8px;line-height:11px;color:#000;transform:scaleX(0.9750);transform-origin:left center;">16</span><div class="a" style="left:737px;top:192px;width:114px;height:276px;border:1px solid #a6a6a6;"></div><svg class="a" style="left:716px;top:483px" width="8" height="12" viewBox="0 0 8 12"><path d="M0.6 0.7 L6.5 6 L0.6 11.3 Z" fill="#f6f6f6" stroke="#7e7e7e" stroke-width="1.1"/></svg><div class="a" style="left:724px;top:481px;width:79px;height:16px;background:#fbfbfb;border:1px solid #c4c4c4;"></div><span class="t" style="left:727.00px;top:483.00px;font-size:12px;line-height:14px;color:#000;font-weight:bold;transform:scaleX(0.9476);transform-origin:left center;">Frequencies</span><svg class="a" style="left:899px;top:168px" width="10" height="10" viewBox="0 0 10 10"><path d="M0.9 8.5 L8.5 8.5 L8.5 0.9 Z" fill="#c4c4c4" stroke="#555" stroke-width="1" stroke-linejoin="miter"/></svg><div class="a" style="left:909px;top:164px;width:178px;height:16px;background:#fbfbfb;border:1px solid #c4c4c4;"></div><div class="a" style="left:913px;top:167px;width:14px;height:12px;background:#fff;border:1px solid #b6b6b6;border-radius:3px;box-sizing:border-box"></div><svg class="a" style="left:913px;top:167px" width="14" height="12" viewBox="0 0 14 12"><path d="M2.9000000000000004 3.8 L11.1 3.8 L7.0 8.3 Z" fill="#d0060e"/></svg><span class="t" style="left:929.30px;top:166.00px;font-size:12px;line-height:14px;color:#000;font-weight:bold;transform:scaleX(0.9904);transform-origin:left center;">Unique Subject Identifier</span><div class="a" style="left:968px;top:192px;width:116px;height:278px;background:#fff;"></div><div class="a" style="left:968px;top:197px;width:92px;height:16px;background:#b9c9ba;border:1px solid #4b554b;"></div><span class="t" style="left:925.85px;top:199.00px;font-size:12px;line-height:14px;color:#000;transform:scaleX(0.9750);transform-origin:right center;">442004</span><span class="t" style="left:1063.20px;top:200.00px;font-size:9.8px;line-height:11px;color:#000;transform:scaleX(0.9750);transform-origin:left center;">1</span><div class="a" style="left:968px;top:214px;width:92px;height:15px;background:#b9c9ba;border:1px solid #4b554b;"></div><span class="t" style="left:925.85px;top:216.00px;font-size:12px;line-height:14px;color:#000;transform:scaleX(0.9750);transform-origin:right center;">441014</span><span class="t" style="left:1063.20px;top:217.00px;font-size:9.8px;line-height:11px;color:#000;transform:scaleX(0.9750);transform-origin:left center;">1</span><div class="a" style="left:968px;top:230px;width:92px;height:16px;background:#b9c9ba;border:1px solid #4b554b;"></div><span class="t" style="left:925.85px;top:233.00px;font-size:12px;line-height:14px;color:#000;transform:scaleX(0.9750);transform-origin:right center;">401031</span><span class="t" style="left:1063.20px;top:233.00px;font-size:9.8px;line-height:11px;color:#000;transform:scaleX(0.9750);transform-origin:left center;">1</span><div class="a" style="left:968px;top:247px;width:92px;height:16px;background:#b9c9ba;border:1px solid #4b554b;"></div><span class="t" style="left:925.85px;top:249.00px;font-size:12px;line-height:14px;color:#000;transform:scaleX(0.9750);transform-origin:right center;">401024</span><span class="t" style="left:1063.20px;top:250.00px;font-size:9.8px;line-height:11px;color:#000;transform:scaleX(0.9750);transform-origin:left center;">1</span><div class="a" style="left:968px;top:264px;width:92px;height:15px;background:#b9c9ba;border:1px solid #4b554b;"></div><span class="t" style="left:925.85px;top:266.00px;font-size:12px;line-height:14px;color:#000;transform:scaleX(0.9750);transform-origin:right center;">401023</span><span class="t" style="left:1063.20px;top:267.00px;font-size:9.8px;line-height:11px;color:#000;transform:scaleX(0.9750);transform-origin:left center;">1</span><div class="a" style="left:968px;top:280px;width:92px;height:16px;background:#b9c9ba;border:1px solid #4b554b;"></div><span class="t" style="left:925.85px;top:283.00px;font-size:12px;line-height:14px;color:#000;transform:scaleX(0.9750);transform-origin:right center;">401022</span><span class="t" style="left:1063.20px;top:283.00px;font-size:9.8px;line-height:11px;color:#000;transform:scaleX(0.9750);transform-origin:left center;">1</span><div class="a" style="left:968px;top:297px;width:92px;height:16px;background:#b9c9ba;border:1px solid #4b554b;"></div><span class="t" style="left:925.85px;top:299.00px;font-size:12px;line-height:14px;color:#000;transform:scaleX(0.9750);transform-origin:right center;">401017</span><span class="t" style="left:1063.20px;top:300.00px;font-size:9.8px;line-height:11px;color:#000;transform:scaleX(0.9750);transform-origin:left center;">1</span><div class="a" style="left:968px;top:314px;width:92px;height:15px;background:#b9c9ba;border:1px solid #4b554b;"></div><span class="t" style="left:925.85px;top:316.00px;font-size:12px;line-height:14px;color:#000;transform:scaleX(0.9750);transform-origin:right center;">401016</span><span class="t" style="left:1063.20px;top:317.00px;font-size:9.8px;line-height:11px;color:#000;transform:scaleX(0.9750);transform-origin:left center;">1</span><div class="a" style="left:968px;top:330px;width:92px;height:16px;background:#b9c9ba;border:1px solid #4b554b;"></div><span class="t" style="left:925.85px;top:333.00px;font-size:12px;line-height:14px;color:#000;transform:scaleX(0.9750);transform-origin:right center;">321025</span><span class="t" style="left:1063.20px;top:333.00px;font-size:9.8px;line-height:11px;color:#000;transform:scaleX(0.9750);transform-origin:left center;">1</span><div class="a" style="left:968px;top:347px;width:92px;height:16px;background:#b9c9ba;border:1px solid #4b554b;"></div><span class="t" style="left:925.85px;top:349.00px;font-size:12px;line-height:14px;color:#000;transform:scaleX(0.9750);transform-origin:right center;">321013</span><span class="t" style="left:1063.20px;top:350.00px;font-size:9.8px;line-height:11px;color:#000;transform:scaleX(0.9750);transform-origin:left center;">1</span><div class="a" style="left:968px;top:364px;width:92px;height:16px;background:#b9c9ba;border:1px solid #4b554b;"></div><span class="t" style="left:932.52px;top:366.00px;font-size:12px;line-height:14px;color:#000;transform:scaleX(0.9750);transform-origin:right center;">91031</span><span class="t" style="left:1063.20px;top:367.00px;font-size:9.8px;line-height:11px;color:#000;transform:scaleX(0.9750);transform-origin:left center;">1</span><div class="a" style="left:968px;top:381px;width:92px;height:15px;background:#b9c9ba;border:1px solid #4b554b;"></div><span class="t" style="left:932.52px;top:383.00px;font-size:12px;line-height:14px;color:#000;transform:scaleX(0.9750);transform-origin:right center;">91030</span><span class="t" style="left:1063.20px;top:384.00px;font-size:9.8px;line-height:11px;color:#000;transform:scaleX(0.9750);transform-origin:left center;">1</span><div class="a" style="left:968px;top:397px;width:92px;height:16px;background:#b9c9ba;border:1px solid #4b554b;"></div><span class="t" style="left:932.52px;top:399.00px;font-size:12px;line-height:14px;color:#000;transform:scaleX(0.9750);transform-origin:right center;">91010</span><span class="t" style="left:1063.20px;top:400.00px;font-size:9.8px;line-height:11px;color:#000;transform:scaleX(0.9750);transform-origin:left center;">1</span><div class="a" style="left:968px;top:414px;width:92px;height:16px;background:#b9c9ba;border:1px solid #4b554b;"></div><span class="t" style="left:932.52px;top:416.00px;font-size:12px;line-height:14px;color:#000;transform:scaleX(0.9750);transform-origin:right center;">91002</span><span class="t" style="left:1063.20px;top:417.00px;font-size:9.8px;line-height:11px;color:#000;transform:scaleX(0.9750);transform-origin:left center;">1</span><div class="a" style="left:968px;top:431px;width:92px;height:15px;background:#b9c9ba;border:1px solid #4b554b;"></div><span class="t" style="left:932.52px;top:433.00px;font-size:12px;line-height:14px;color:#000;transform:scaleX(0.9750);transform-origin:right center;">31017</span><span class="t" style="left:1063.20px;top:434.00px;font-size:9.8px;line-height:11px;color:#000;transform:scaleX(0.9750);transform-origin:left center;">1</span><div class="a" style="left:968px;top:447px;width:92px;height:16px;background:#b9c9ba;border:1px solid #4b554b;"></div><span class="t" style="left:932.52px;top:450.00px;font-size:12px;line-height:14px;color:#000;transform:scaleX(0.9750);transform-origin:right center;">31013</span><span class="t" style="left:1063.20px;top:450.00px;font-size:9.8px;line-height:11px;color:#000;transform:scaleX(0.9750);transform-origin:left center;">1</span><div class="a" style="left:968px;top:192px;width:114px;height:276px;border:1px solid #a6a6a6;"></div><svg class="a" style="left:915px;top:483px" width="8" height="12" viewBox="0 0 8 12"><path d="M0.6 0.7 L6.5 6 L0.6 11.3 Z" fill="#f6f6f6" stroke="#7e7e7e" stroke-width="1.1"/></svg><div class="a" style="left:923px;top:481px;width:79px;height:16px;background:#fbfbfb;border:1px solid #c4c4c4;"></div><span class="t" style="left:926.00px;top:483.00px;font-size:12px;line-height:14px;color:#000;font-weight:bold;transform:scaleX(0.9476);transform-origin:left center;">Frequencies</span><svg class="a" style="left:1098px;top:168px" width="10" height="10" viewBox="0 0 10 10"><path d="M0.9 8.5 L8.5 8.5 L8.5 0.9 Z" fill="#c4c4c4" stroke="#555" stroke-width="1" stroke-linejoin="miter"/></svg><div class="a" style="left:1108px;top:164px;width:152px;height:16px;background:#fbfbfb;border:1px solid #c4c4c4;"></div><div class="a" style="left:1112px;top:167px;width:14px;height:12px;background:#fff;border:1px solid #b6b6b6;border-radius:3px;box-sizing:border-box"></div><svg class="a" style="left:1112px;top:167px" width="14" height="12" viewBox="0 0 14 12"><path d="M2.9000000000000004 3.8 L11.1 3.8 L7.0 8.3 Z" fill="#d0060e"/></svg><span class="t" style="left:1127.70px;top:166.00px;font-size:12px;line-height:14px;color:#000;font-weight:bold;transform:scaleX(0.9966);transform-origin:left center;">Study Site Identifier</span><div class="a" style="left:1141px;top:192px;width:116px;height:278px;background:#fff;"></div><div class="a" style="left:1141px;top:197px;width:92px;height:52px;background:#b9c9ba;border:1px solid #4b554b;"></div><span class="t" style="left:1125.54px;top:218.00px;font-size:12px;line-height:14px;color:#000;transform:scaleX(0.9750);transform-origin:right center;">40</span><span class="t" style="left:1236.20px;top:218.00px;font-size:9.8px;line-height:11px;color:#000;transform:scaleX(0.9750);transform-origin:left center;">6</span><div class="a" style="left:1141px;top:250px;width:61px;height:53px;background:#b9c9ba;border:1px solid #4b554b;"></div><span class="t" style="left:1125.54px;top:271.00px;font-size:12px;line-height:14px;color:#000;transform:scaleX(0.9750);transform-origin:right center;">09</span><span class="t" style="left:1205.20px;top:272.00px;font-size:9.8px;line-height:11px;color:#000;transform:scaleX(0.9750);transform-origin:left center;">4</span><div class="a" style="left:1141px;top:304px;width:30px;height:52px;background:#b9c9ba;border:1px solid #4b554b;"></div><span class="t" style="left:1125.54px;top:324.00px;font-size:12px;line-height:14px;color:#000;transform:scaleX(0.9750);transform-origin:right center;">44</span><span class="t" style="left:1173.70px;top:325.00px;font-size:9.8px;line-height:11px;color:#000;transform:scaleX(0.9750);transform-origin:left center;">2</span><div class="a" style="left:1141px;top:357px;width:30px;height:53px;background:#b9c9ba;border:1px solid #4b554b;"></div><span class="t" style="left:1125.54px;top:378.00px;font-size:12px;line-height:14px;color:#000;transform:scaleX(0.9750);transform-origin:right center;">32</span><span class="t" style="left:1173.70px;top:379.00px;font-size:9.8px;line-height:11px;color:#000;transform:scaleX(0.9750);transform-origin:left center;">2</span><div class="a" style="left:1141px;top:411px;width:30px;height:52px;background:#b9c9ba;border:1px solid #4b554b;"></div><span class="t" style="left:1125.54px;top:431.00px;font-size:12px;line-height:14px;color:#000;transform:scaleX(0.9750);transform-origin:right center;">03</span><span class="t" style="left:1173.70px;top:432.00px;font-size:9.8px;line-height:11px;color:#000;transform:scaleX(0.9750);transform-origin:left center;">2</span><div class="a" style="left:1141px;top:192px;width:114px;height:276px;border:1px solid #a6a6a6;"></div><svg class="a" style="left:1114px;top:483px" width="8" height="12" viewBox="0 0 8 12"><path d="M0.6 0.7 L6.5 6 L0.6 11.3 Z" fill="#f6f6f6" stroke="#7e7e7e" stroke-width="1.1"/></svg><div class="a" style="left:1122px;top:481px;width:79px;height:16px;background:#fbfbfb;border:1px solid #c4c4c4;"></div><span class="t" style="left:1125.00px;top:483.00px;font-size:12px;line-height:14px;color:#000;font-weight:bold;transform:scaleX(0.9476);transform-origin:left center;">Frequencies</span><svg class="a" style="left:1271px;top:168px" width="10" height="10" viewBox="0 0 10 10"><path d="M0.9 8.5 L8.5 8.5 L8.5 0.9 Z" fill="#c4c4c4" stroke="#555" stroke-width="1" stroke-linejoin="miter"/></svg><div class="a" style="left:1281px;top:164px;width:216px;height:16px;background:#fbfbfb;border:1px solid #c4c4c4;"></div><div class="a" style="left:1285px;top:167px;width:14px;height:12px;background:#fff;border:1px solid #b6b6b6;border-radius:3px;box-sizing:border-box"></div><svg class="a" style="left:1285px;top:167px" width="14" height="12" viewBox="0 0 14 12"><path d="M2.9000000000000004 3.8 L11.1 3.8 L7.0 8.3 Z" fill="#d0060e"/></svg><span class="t" style="left:1301.60px;top:166.00px;font-size:12px;line-height:14px;color:#000;font-weight:bold;transform:scaleX(0.9844);transform-origin:left center;">Planned Treatment for Period 01</span><div class="a" style="left:1343px;top:192px;width:116px;height:278px;background:#fff;"></div><div class="a" style="left:1343px;top:197px;width:92px;height:132px;background:#b9c9ba;border:1px solid #4b554b;"></div><span class="t" style="left:1297.53px;top:258.00px;font-size:12px;line-height:14px;color:#000;transform:scaleX(0.9568);transform-origin:right center;">Placebo</span><span class="t" style="left:1438.20px;top:258.00px;font-size:9.8px;line-height:11px;color:#000;transform:scaleX(0.9750);transform-origin:left center;">8</span><div class="a" style="left:1343px;top:330px;width:92px;height:133px;background:#b9c9ba;border:1px solid #4b554b;"></div><span class="t" style="left:1300.21px;top:391.00px;font-size:12px;line-height:14px;color:#000;transform:scaleX(0.9536);transform-origin:right center;">NIC .15</span><span class="t" style="left:1438.20px;top:392.00px;font-size:9.8px;line-height:11px;color:#000;transform:scaleX(0.9750);transform-origin:left center;">8</span><div class="a" style="left:1343px;top:192px;width:114px;height:276px;border:1px solid #a6a6a6;"></div><svg class="a" style="left:1287px;top:483px" width="8" height="12" viewBox="0 0 8 12"><path d="M0.6 0.7 L6.5 6 L0.6 11.3 Z" fill="#f6f6f6" stroke="#7e7e7e" stroke-width="1.1"/></svg><div class="a" style="left:1295px;top:481px;width:79px;height:16px;background:#fbfbfb;border:1px solid #c4c4c4;"></div><span class="t" style="left:1298.00px;top:483.00px;font-size:12px;line-height:14px;color:#000;font-weight:bold;transform:scaleX(0.9476);transform-origin:left center;">Frequencies</span><svg class="a" style="left:1508px;top:168px" width="10" height="10" viewBox="0 0 10 10"><path d="M0.9 8.5 L8.5 8.5 L8.5 0.9 Z" fill="#c4c4c4" stroke="#555" stroke-width="1" stroke-linejoin="miter"/></svg><div class="a" style="left:1518px;top:164px;width:162px;height:16px;background:#fbfbfb;border:1px solid #c4c4c4;"></div><div class="a" style="left:1522px;top:167px;width:14px;height:12px;background:#fff;border:1px solid #b6b6b6;border-radius:3px;box-sizing:border-box"></div><svg class="a" style="left:1522px;top:167px" width="14" height="12" viewBox="0 0 14 12"><path d="M2.9000000000000004 3.8 L11.1 3.8 L7.0 8.3 Z" fill="#d0060e"/></svg><span class="t" style="left:1537.50px;top:166.00px;font-size:12px;line-height:14px;color:#000;font-weight:bold;transform:scaleX(0.9761);transform-origin:left center;">Country</span><div class="a" style="left:1561px;top:192px;width:116px;height:278px;background:#fff;"></div><div class="a" style="left:1561px;top:197px;width:88px;height:266px;background:#b9c9ba;border:1px solid #4b554b;"></div><span class="t" style="left:1534.21px;top:324.00px;font-size:12px;line-height:14px;color:#000;transform:scaleX(0.9033);transform-origin:right center;">USA</span><span class="t" style="left:1652.20px;top:325.00px;font-size:9.8px;line-height:11px;color:#000;transform:scaleX(0.9750);transform-origin:left center;">16</span><div class="a" style="left:1561px;top:192px;width:114px;height:276px;border:1px solid #a6a6a6;"></div><svg class="a" style="left:1524px;top:483px" width="8" height="12" viewBox="0 0 8 12"><path d="M0.6 0.7 L6.5 6 L0.6 11.3 Z" fill="#f6f6f6" stroke="#7e7e7e" stroke-width="1.1"/></svg><div class="a" style="left:1532px;top:481px;width:79px;height:16px;background:#fbfbfb;border:1px solid #c4c4c4;"></div><span class="t" style="left:1535.00px;top:483.00px;font-size:12px;line-height:14px;color:#000;font-weight:bold;transform:scaleX(0.9476);transform-origin:left center;">Frequencies</span><svg class="a" style="left:294px;top:503px" width="10" height="10" viewBox="0 0 10 10"><path d="M0.9 8.5 L8.5 8.5 L8.5 0.9 Z" fill="#c4c4c4" stroke="#555" stroke-width="1" stroke-linejoin="miter"/></svg><div class="a" style="left:304px;top:499px;width:1381px;height:16px;background:#fbfbfb;border:1px solid #c4c4c4;"></div><span class="t" style="left:306.80px;top:501.00px;font-size:12px;line-height:14px;color:#000;font-weight:bold;transform:scaleX(0.9479);transform-origin:left center;">LB Duplicate Records</span><svg class="a" style="left:310px;top:526px" width="10" height="10" viewBox="0 0 10 10"><path d="M0.9 8.5 L8.5 8.5 L8.5 0.9 Z" fill="#c4c4c4" stroke="#555" stroke-width="1" stroke-linejoin="miter"/></svg><div class="a" style="left:320px;top:522px;width:186px;height:16px;background:#fbfbfb;border:1px solid #c4c4c4;"></div><div class="a" style="left:324px;top:525px;width:14px;height:12px;background:#fff;border:1px solid #b6b6b6;border-radius:3px;box-sizing:border-box"></div><svg class="a" style="left:324px;top:525px" width="14" height="12" viewBox="0 0 14 12"><path d="M2.9000000000000004 3.8 L11.1 3.8 L7.0 8.3 Z" fill="#d0060e"/></svg><span class="t" style="left:340.20px;top:524.00px;font-size:12px;line-height:14px;color:#000;font-weight:bold;transform:scaleX(0.9669);transform-origin:left center;">Section Filter</span><svg class="a" style="left:514px;top:526px" width="10" height="10" viewBox="0 0 10 10"><path d="M0.9 8.5 L8.5 8.5 L8.5 0.9 Z" fill="#c4c4c4" stroke="#555" stroke-width="1" stroke-linejoin="miter"/></svg><div class="a" style="left:524px;top:522px;width:1161px;height:16px;background:#fbfbfb;border:1px solid #c4c4c4;"></div><div class="a" style="left:528px;top:525px;width:14px;height:12px;background:#fff;border:1px solid #b6b6b6;border-radius:3px;box-sizing:border-box"></div><svg class="a" style="left:528px;top:525px" width="14" height="12" viewBox="0 0 14 12"><path d="M2.9000000000000004 3.8 L11.1 3.8 L7.0 8.3 Z" fill="#d0060e"/></svg><span class="t" style="left:543.80px;top:524.00px;font-size:12px;line-height:14px;color:#000;font-weight:bold;transform:scaleX(0.9456);transform-origin:left center;">LB Distributions</span><div class="a" style="left:324px;top:548px;width:58px;height:17px;background:#e1e1e1;border:1px solid #707070;"></div><span class="t" style="left:340.20px;top:551.00px;font-size:12px;line-height:14px;color:#000;transform:scaleX(0.9342);transform-origin:left center;">Clear</span><div class="a" style="left:322px;top:591px;width:185px;height:175px;background:#f8f8f8;border:1px solid #d4d4d4;"></div><div class="a" style="left:333px;top:599px;width:14px;height:12px;background:#fff;border:1px solid #b6b6b6;border-radius:3px;box-sizing:border-box"></div><svg class="a" style="left:333px;top:599px" width="14" height="12" viewBox="0 0 14 12"><path d="M2.9000000000000004 3.8 L11.1 3.8 L7.0 8.3 Z" fill="#d0060e"/></svg><span class="t" style="left:370.02px;top:598.00px;font-size:12px;line-height:14px;color:#000;font-weight:bold;transform:scaleX(0.9867);transform-origin:center center;">Duplicate ID (6)</span><svg class="a" style="left:485px;top:599.5px" width="10" height="10" viewBox="0 0 10 10"><path d="M1.2 1.2 L8.3 8.3 M8.3 1.2 L1.2 8.3" stroke="#8f8f8f" stroke-width="1.7" fill="none"/></svg><div class="a" style="left:327px;top:615px;width:177px;height:103px;background:#fff;"></div><div class="a" style="left:327px;top:616px;width:164px;height:15px;background:#d4dae2;"></div><span class="t" style="left:330.00px;top:617.00px;font-size:12px;line-height:14px;color:#000;transform:scaleX(0.9750);transform-origin:left center;">1</span><span class="t" style="left:494.30px;top:618.00px;font-size:12px;line-height:14px;color:#000;transform:scaleX(0.9750);transform-origin:left center;">2</span><div class="a" style="left:327px;top:633px;width:164px;height:15px;background:#d4dae2;"></div><span class="t" style="left:330.00px;top:634.00px;font-size:12px;line-height:14px;color:#000;transform:scaleX(0.9750);transform-origin:left center;">2</span><span class="t" style="left:494.30px;top:635.00px;font-size:12px;line-height:14px;color:#000;transform:scaleX(0.9750);transform-origin:left center;">2</span><div class="a" style="left:327px;top:650px;width:164px;height:15px;background:#d4dae2;"></div><span class="t" style="left:330.00px;top:651.00px;font-size:12px;line-height:14px;color:#000;transform:scaleX(0.9750);transform-origin:left center;">3</span><span class="t" style="left:494.30px;top:652.00px;font-size:12px;line-height:14px;color:#000;transform:scaleX(0.9750);transform-origin:left center;">2</span><div class="a" style="left:327px;top:667px;width:164px;height:15px;background:#d4dae2;"></div><span class="t" style="left:330.00px;top:668.00px;font-size:12px;line-height:14px;color:#000;transform:scaleX(0.9750);transform-origin:left center;">4</span><span class="t" style="left:494.30px;top:669.00px;font-size:12px;line-height:14px;color:#000;transform:scaleX(0.9750);transform-origin:left center;">2</span><div class="a" style="left:327px;top:684px;width:164px;height:15px;background:#d4dae2;"></div><span class="t" style="left:330.00px;top:685.00px;font-size:12px;line-height:14px;color:#000;transform:scaleX(0.9750);transform-origin:left center;">5</span><span class="t" style="left:494.30px;top:686.00px;font-size:12px;line-height:14px;color:#000;transform:scaleX(0.9750);transform-origin:left center;">2</span><div class="a" style="left:327px;top:701px;width:164px;height:15px;background:#d4dae2;"></div><span class="t" style="left:330.00px;top:702.00px;font-size:12px;line-height:14px;color:#000;transform:scaleX(0.9750);transform-origin:left center;">6</span><span class="t" style="left:494.30px;top:703.00px;font-size:12px;line-height:14px;color:#000;transform:scaleX(0.9750);transform-origin:left center;">2</span><div class="a" style="left:325px;top:720px;width:180px;height:1px;background:#dcdcdc;"></div><div class="a" style="left:333px;top:727px;width:14px;height:12px;background:#fff;border:1px solid #b6b6b6;border-radius:3px;box-sizing:border-box"></div><svg class="a" style="left:333px;top:727px" width="14" height="12" viewBox="0 0 14 12"><path d="M2.9000000000000004 3.8 L11.1 3.8 L7.0 8.3 Z" fill="#d0060e"/></svg><span class="t" style="left:351.30px;top:726.00px;font-size:12px;line-height:14px;color:#000;font-weight:bold;transform:scaleX(0.9926);transform-origin:left center;">Non-Missi...onents (3)</span><svg class="a" style="left:485px;top:727px" width="10" height="10" viewBox="0 0 10 10"><path d="M1.2 1.2 L8.3 8.3 M8.3 1.2 L1.2 8.3" stroke="#8f8f8f" stroke-width="1.7" fill="none"/></svg><div class="a" style="left:327px;top:744px;width:55px;height:12px;background:#d4dae2;border:1px solid #a9b0b8;"></div><span class="t" style="left:352.70px;top:745.00px;font-size:9.6px;line-height:11px;color:#000;transform:scaleX(0.9750);transform-origin:center center;">1</span><div class="a" style="left:386px;top:744px;width:55px;height:12px;background:#d4dae2;border:1px solid #a9b0b8;"></div><span class="t" style="left:411.83px;top:745.00px;font-size:9.6px;line-height:11px;color:#000;transform:scaleX(0.9750);transform-origin:center center;">2</span><div class="a" style="left:445px;top:744px;width:56px;height:12px;background:#d4dae2;border:1px solid #a9b0b8;"></div><span class="t" style="left:468.79px;top:745.00px;font-size:9.6px;line-height:11px;color:#000;transform:scaleX(0.9750);transform-origin:center center;">24</span><div class="a" style="left:323px;top:771px;width:58px;height:17px;background:#e1e1e1;border:1px solid #707070;"></div><span class="t" style="left:341.30px;top:774.00px;font-size:12px;line-height:14px;color:#000;transform:scaleX(0.9588);transform-origin:left center;">AND</span><svg class="a" style="left:533px;top:549px" width="10" height="10" viewBox="0 0 10 10"><path d="M0.9 8.5 L8.5 8.5 L8.5 0.9 Z" fill="#c4c4c4" stroke="#555" stroke-width="1" stroke-linejoin="miter"/></svg><div class="a" style="left:543px;top:545px;width:146px;height:16px;background:#fbfbfb;border:1px solid #c4c4c4;"></div><div class="a" style="left:547px;top:548px;width:14px;height:12px;background:#fff;border:1px solid #b6b6b6;border-radius:3px;box-sizing:border-box"></div><svg class="a" style="left:547px;top:548px" width="14" height="12" viewBox="0 0 14 12"><path d="M2.9000000000000004 3.8 L11.1 3.8 L7.0 8.3 Z" fill="#d0060e"/></svg><span class="t" style="left:563.60px;top:547.00px;font-size:12px;line-height:14px;color:#000;font-weight:bold;transform:scaleX(0.9732);transform-origin:left center;">Duplicate ID</span><div class="a" style="left:570px;top:573px;width:116px;height:278px;background:#fff;"></div><div class="a" style="left:570px;top:578px;width:92px;height:43px;background:#b9c9ba;border:1px solid #4b554b;"></div><span class="t" style="left:561.21px;top:594.00px;font-size:12px;line-height:14px;color:#000;transform:scaleX(0.9750);transform-origin:right center;">6</span><span class="t" style="left:665.20px;top:595.00px;font-size:9.8px;line-height:11px;color:#000;transform:scaleX(0.9750);transform-origin:left center;">2</span><div class="a" style="left:570px;top:622px;width:92px;height:44px;background:#b9c9ba;border:1px solid #4b554b;"></div><span class="t" style="left:561.21px;top:639.00px;font-size:12px;line-height:14px;color:#000;transform:scaleX(0.9750);transform-origin:right center;">5</span><span class="t" style="left:665.20px;top:639.00px;font-size:9.8px;line-height:11px;color:#000;transform:scaleX(0.9750);transform-origin:left center;">2</span><div class="a" style="left:570px;top:667px;width:92px;height:43px;background:#b9c9ba;border:1px solid #4b554b;"></div><span class="t" style="left:561.21px;top:683.00px;font-size:12px;line-height:14px;color:#000;transform:scaleX(0.9750);transform-origin:right center;">4</span><span class="t" style="left:665.20px;top:684.00px;font-size:9.8px;line-height:11px;color:#000;transform:scaleX(0.9750);transform-origin:left center;">2</span><div class="a" style="left:570px;top:711px;width:92px;height:44px;background:#b9c9ba;border:1px solid #4b554b;"></div><span class="t" style="left:561.21px;top:728.00px;font-size:12px;line-height:14px;color:#000;transform:scaleX(0.9750);transform-origin:right center;">3</span><span class="t" style="left:665.20px;top:728.00px;font-size:9.8px;line-height:11px;color:#000;transform:scaleX(0.9750);transform-origin:left center;">2</span><div class="a" style="left:570px;top:756px;width:92px;height:43px;background:#b9c9ba;border:1px solid #4b554b;"></div><span class="t" style="left:561.21px;top:772.00px;font-size:12px;line-height:14px;color:#000;transform:scaleX(0.9750);transform-origin:right center;">2</span><span class="t" style="left:665.20px;top:773.00px;font-size:9.8px;line-height:11px;color:#000;transform:scaleX(0.9750);transform-origin:left center;">2</span><div class="a" style="left:570px;top:800px;width:92px;height:44px;background:#b9c9ba;border:1px solid #4b554b;"></div><span class="t" style="left:561.21px;top:817.00px;font-size:12px;line-height:14px;color:#000;transform:scaleX(0.9750);transform-origin:right center;">1</span><span class="t" style="left:665.20px;top:817.00px;font-size:9.8px;line-height:11px;color:#000;transform:scaleX(0.9750);transform-origin:left center;">2</span><div class="a" style="left:570px;top:573px;width:114px;height:276px;border:1px solid #a6a6a6;"></div><svg class="a" style="left:549px;top:864px" width="8" height="12" viewBox="0 0 8 12"><path d="M0.6 0.7 L6.5 6 L0.6 11.3 Z" fill="#f6f6f6" stroke="#7e7e7e" stroke-width="1.1"/></svg><div class="a" style="left:557px;top:862px;width:79px;height:16px;background:#fbfbfb;border:1px solid #c4c4c4;"></div><span class="t" style="left:560.00px;top:864.00px;font-size:12px;line-height:14px;color:#000;font-weight:bold;transform:scaleX(0.9476);transform-origin:left center;">Frequencies</span><svg class="a" style="left:700px;top:549px" width="10" height="10" viewBox="0 0 10 10"><path d="M0.9 8.5 L8.5 8.5 L8.5 0.9 Z" fill="#c4c4c4" stroke="#555" stroke-width="1" stroke-linejoin="miter"/></svg><div class="a" style="left:710px;top:545px;width:178px;height:16px;background:#fbfbfb;border:1px solid #c4c4c4;"></div><div class="a" style="left:714px;top:548px;width:14px;height:12px;background:#fff;border:1px solid #b6b6b6;border-radius:3px;box-sizing:border-box"></div><svg class="a" style="left:714px;top:548px" width="14" height="12" viewBox="0 0 14 12"><path d="M2.9000000000000004 3.8 L11.1 3.8 L7.0 8.3 Z" fill="#d0060e"/></svg><span class="t" style="left:730.30px;top:547.00px;font-size:12px;line-height:14px;color:#000;font-weight:bold;transform:scaleX(0.9719);transform-origin:left center;">Non-Missing Components</span><div class="a" style="left:743px;top:573px;width:116px;height:278px;background:#fff;"></div><div class="a" style="left:743px;top:578px;width:92px;height:88px;background:#b9c9ba;border:1px solid #4b554b;"></div><span class="t" style="left:734.21px;top:616.00px;font-size:12px;line-height:14px;color:#000;transform:scaleX(0.9750);transform-origin:right center;">1</span><span class="t" style="left:838.20px;top:617.00px;font-size:9.8px;line-height:11px;color:#000;transform:scaleX(0.9750);transform-origin:left center;">6</span><div class="a" style="left:743px;top:667px;width:61px;height:88px;background:#b9c9ba;border:1px solid #4b554b;"></div><span class="t" style="left:734.21px;top:705.00px;font-size:12px;line-height:14px;color:#000;transform:scaleX(0.9750);transform-origin:right center;">2</span><span class="t" style="left:807.20px;top:706.00px;font-size:9.8px;line-height:11px;color:#000;transform:scaleX(0.9750);transform-origin:left center;">4</span><div class="a" style="left:743px;top:756px;width:30px;height:88px;background:#b9c9ba;border:1px solid #4b554b;"></div><span class="t" style="left:727.54px;top:794.00px;font-size:12px;line-height:14px;color:#000;transform:scaleX(0.9750);transform-origin:right center;">24</span><span class="t" style="left:775.70px;top:795.00px;font-size:9.8px;line-height:11px;color:#000;transform:scaleX(0.9750);transform-origin:left center;">2</span><div class="a" style="left:743px;top:573px;width:114px;height:276px;border:1px solid #a6a6a6;"></div><svg class="a" style="left:716px;top:864px" width="8" height="12" viewBox="0 0 8 12"><path d="M0.6 0.7 L6.5 6 L0.6 11.3 Z" fill="#f6f6f6" stroke="#7e7e7e" stroke-width="1.1"/></svg><div class="a" style="left:724px;top:862px;width:79px;height:16px;background:#fbfbfb;border:1px solid #c4c4c4;"></div><span class="t" style="left:727.00px;top:864.00px;font-size:12px;line-height:14px;color:#000;font-weight:bold;transform:scaleX(0.9476);transform-origin:left center;">Frequencies</span><svg class="a" style="left:899px;top:549px" width="10" height="10" viewBox="0 0 10 10"><path d="M0.9 8.5 L8.5 8.5 L8.5 0.9 Z" fill="#c4c4c4" stroke="#555" stroke-width="1" stroke-linejoin="miter"/></svg><div class="a" style="left:909px;top:545px;width:178px;height:16px;background:#fbfbfb;border:1px solid #c4c4c4;"></div><div class="a" style="left:913px;top:548px;width:14px;height:12px;background:#fff;border:1px solid #b6b6b6;border-radius:3px;box-sizing:border-box"></div><svg class="a" style="left:913px;top:548px" width="14" height="12" viewBox="0 0 14 12"><path d="M2.9000000000000004 3.8 L11.1 3.8 L7.0 8.3 Z" fill="#d0060e"/></svg><span class="t" style="left:929.30px;top:547.00px;font-size:12px;line-height:14px;color:#000;font-weight:bold;transform:scaleX(0.9904);transform-origin:left center;">Unique Subject Identifier</span><div class="a" style="left:968px;top:573px;width:116px;height:278px;background:#fff;"></div><div class="a" style="left:968px;top:578px;width:92px;height:21px;background:#b9c9ba;border:1px solid #4b554b;"></div><span class="t" style="left:925.85px;top:583.00px;font-size:12px;line-height:14px;color:#000;transform:scaleX(0.9750);transform-origin:right center;">321041</span><span class="t" style="left:1063.20px;top:584.00px;font-size:9.8px;line-height:11px;color:#000;transform:scaleX(0.9750);transform-origin:left center;">1</span><div class="a" style="left:968px;top:600px;width:92px;height:21px;background:#b9c9ba;border:1px solid #4b554b;"></div><span class="t" style="left:925.85px;top:605.00px;font-size:12px;line-height:14px;color:#000;transform:scaleX(0.9750);transform-origin:right center;">321040</span><span class="t" style="left:1063.20px;top:606.00px;font-size:9.8px;line-height:11px;color:#000;transform:scaleX(0.9750);transform-origin:left center;">1</span><div class="a" style="left:968px;top:622px;width:92px;height:22px;background:#b9c9ba;border:1px solid #4b554b;"></div><span class="t" style="left:925.85px;top:628.00px;font-size:12px;line-height:14px;color:#000;transform:scaleX(0.9750);transform-origin:right center;">291010</span><span class="t" style="left:1063.20px;top:628.00px;font-size:9.8px;line-height:11px;color:#000;transform:scaleX(0.9750);transform-origin:left center;">1</span><div class="a" style="left:968px;top:645px;width:92px;height:21px;background:#b9c9ba;border:1px solid #4b554b;"></div><span class="t" style="left:925.85px;top:650.00px;font-size:12px;line-height:14px;color:#000;transform:scaleX(0.9750);transform-origin:right center;">291007</span><span class="t" style="left:1063.20px;top:650.00px;font-size:9.8px;line-height:11px;color:#000;transform:scaleX(0.9750);transform-origin:left center;">1</span><div class="a" style="left:968px;top:667px;width:92px;height:21px;background:#b9c9ba;border:1px solid #4b554b;"></div><span class="t" style="left:925.85px;top:672.00px;font-size:12px;line-height:14px;color:#000;transform:scaleX(0.9750);transform-origin:right center;">291006</span><span class="t" style="left:1063.20px;top:673.00px;font-size:9.8px;line-height:11px;color:#000;transform:scaleX(0.9750);transform-origin:left center;">1</span><div class="a" style="left:968px;top:689px;width:92px;height:21px;background:#b9c9ba;border:1px solid #4b554b;"></div><span class="t" style="left:925.85px;top:694.00px;font-size:12px;line-height:14px;color:#000;transform:scaleX(0.9750);transform-origin:right center;">291001</span><span class="t" style="left:1063.20px;top:695.00px;font-size:9.8px;line-height:11px;color:#000;transform:scaleX(0.9750);transform-origin:left center;">1</span><div class="a" style="left:968px;top:711px;width:92px;height:22px;background:#b9c9ba;border:1px solid #4b554b;"></div><span class="t" style="left:925.85px;top:717.00px;font-size:12px;line-height:14px;color:#000;transform:scaleX(0.9750);transform-origin:right center;">251015</span><span class="t" style="left:1063.20px;top:717.00px;font-size:9.8px;line-height:11px;color:#000;transform:scaleX(0.9750);transform-origin:left center;">1</span><div class="a" style="left:968px;top:734px;width:92px;height:21px;background:#b9c9ba;border:1px solid #4b554b;"></div><span class="t" style="left:925.85px;top:739.00px;font-size:12px;line-height:14px;color:#000;transform:scaleX(0.9750);transform-origin:right center;">251013</span><span class="t" style="left:1063.20px;top:739.00px;font-size:9.8px;line-height:11px;color:#000;transform:scaleX(0.9750);transform-origin:left center;">1</span><div class="a" style="left:968px;top:756px;width:92px;height:21px;background:#b9c9ba;border:1px solid #4b554b;"></div><span class="t" style="left:925.85px;top:761.00px;font-size:12px;line-height:14px;color:#000;transform:scaleX(0.9750);transform-origin:right center;">101003</span><span class="t" style="left:1063.20px;top:762.00px;font-size:9.8px;line-height:11px;color:#000;transform:scaleX(0.9750);transform-origin:left center;">1</span><div class="a" style="left:968px;top:778px;width:92px;height:21px;background:#b9c9ba;border:1px solid #4b554b;"></div><span class="t" style="left:925.85px;top:783.00px;font-size:12px;line-height:14px;color:#000;transform:scaleX(0.9750);transform-origin:right center;">101002</span><span class="t" style="left:1063.20px;top:784.00px;font-size:9.8px;line-height:11px;color:#000;transform:scaleX(0.9750);transform-origin:left center;">1</span><div class="a" style="left:968px;top:800px;width:92px;height:22px;background:#b9c9ba;border:1px solid #4b554b;"></div><span class="t" style="left:933.42px;top:806.00px;font-size:12px;line-height:14px;color:#000;transform:scaleX(0.9750);transform-origin:right center;">11034</span><span class="t" style="left:1063.20px;top:806.00px;font-size:9.8px;line-height:11px;color:#000;transform:scaleX(0.9750);transform-origin:left center;">1</span><div class="a" style="left:968px;top:823px;width:92px;height:21px;background:#b9c9ba;border:1px solid #4b554b;"></div><span class="t" style="left:933.42px;top:828.00px;font-size:12px;line-height:14px;color:#000;transform:scaleX(0.9750);transform-origin:right center;">11017</span><span class="t" style="left:1063.20px;top:828.00px;font-size:9.8px;line-height:11px;color:#000;transform:scaleX(0.9750);transform-origin:left center;">1</span><div class="a" style="left:968px;top:573px;width:114px;height:276px;border:1px solid #a6a6a6;"></div><svg class="a" style="left:915px;top:864px" width="8" height="12" viewBox="0 0 8 12"><path d="M0.6 0.7 L6.5 6 L0.6 11.3 Z" fill="#f6f6f6" stroke="#7e7e7e" stroke-width="1.1"/></svg><div class="a" style="left:923px;top:862px;width:79px;height:16px;background:#fbfbfb;border:1px solid #c4c4c4;"></div><span class="t" style="left:926.00px;top:864.00px;font-size:12px;line-height:14px;color:#000;font-weight:bold;transform:scaleX(0.9476);transform-origin:left center;">Frequencies</span><svg class="a" style="left:1098px;top:549px" width="10" height="10" viewBox="0 0 10 10"><path d="M0.9 8.5 L8.5 8.5 L8.5 0.9 Z" fill="#c4c4c4" stroke="#555" stroke-width="1" stroke-linejoin="miter"/></svg><div class="a" style="left:1108px;top:545px;width:152px;height:16px;background:#fbfbfb;border:1px solid #c4c4c4;"></div><div class="a" style="left:1112px;top:548px;width:14px;height:12px;background:#fff;border:1px solid #b6b6b6;border-radius:3px;box-sizing:border-box"></div><svg class="a" style="left:1112px;top:548px" width="14" height="12" viewBox="0 0 14 12"><path d="M2.9000000000000004 3.8 L11.1 3.8 L7.0 8.3 Z" fill="#d0060e"/></svg><span class="t" style="left:1127.70px;top:547.00px;font-size:12px;line-height:14px;color:#000;font-weight:bold;transform:scaleX(0.9966);transform-origin:left center;">Study Site Identifier</span><div class="a" style="left:1141px;top:573px;width:116px;height:278px;background:#fff;"></div><div class="a" style="left:1141px;top:578px;width:92px;height:52px;background:#b9c9ba;border:1px solid #4b554b;"></div><span class="t" style="left:1125.54px;top:599.00px;font-size:12px;line-height:14px;color:#000;transform:scaleX(0.9750);transform-origin:right center;">29</span><span class="t" style="left:1236.20px;top:599.00px;font-size:9.8px;line-height:11px;color:#000;transform:scaleX(0.9750);transform-origin:left center;">4</span><div class="a" style="left:1141px;top:631px;width:46px;height:53px;background:#b9c9ba;border:1px solid #4b554b;"></div><span class="t" style="left:1125.54px;top:652.00px;font-size:12px;line-height:14px;color:#000;transform:scaleX(0.9750);transform-origin:right center;">32</span><span class="t" style="left:1189.70px;top:653.00px;font-size:9.8px;line-height:11px;color:#000;transform:scaleX(0.9750);transform-origin:left center;">2</span><div class="a" style="left:1141px;top:685px;width:46px;height:52px;background:#b9c9ba;border:1px solid #4b554b;"></div><span class="t" style="left:1125.54px;top:705.00px;font-size:12px;line-height:14px;color:#000;transform:scaleX(0.9750);transform-origin:right center;">25</span><span class="t" style="left:1189.70px;top:706.00px;font-size:9.8px;line-height:11px;color:#000;transform:scaleX(0.9750);transform-origin:left center;">2</span><div class="a" style="left:1141px;top:738px;width:46px;height:53px;background:#b9c9ba;border:1px solid #4b554b;"></div><span class="t" style="left:1125.54px;top:759.00px;font-size:12px;line-height:14px;color:#000;transform:scaleX(0.9750);transform-origin:right center;">10</span><span class="t" style="left:1189.70px;top:760.00px;font-size:9.8px;line-height:11px;color:#000;transform:scaleX(0.9750);transform-origin:left center;">2</span><div class="a" style="left:1141px;top:792px;width:46px;height:52px;background:#b9c9ba;border:1px solid #4b554b;"></div><span class="t" style="left:1125.54px;top:812.00px;font-size:12px;line-height:14px;color:#000;transform:scaleX(0.9750);transform-origin:right center;">01</span><span class="t" style="left:1189.70px;top:813.00px;font-size:9.8px;line-height:11px;color:#000;transform:scaleX(0.9750);transform-origin:left center;">2</span><div class="a" style="left:1141px;top:573px;width:114px;height:276px;border:1px solid #a6a6a6;"></div><svg class="a" style="left:1114px;top:864px" width="8" height="12" viewBox="0 0 8 12"><path d="M0.6 0.7 L6.5 6 L0.6 11.3 Z" fill="#f6f6f6" stroke="#7e7e7e" stroke-width="1.1"/></svg><div class="a" style="left:1122px;top:862px;width:79px;height:16px;background:#fbfbfb;border:1px solid #c4c4c4;"></div><span class="t" style="left:1125.00px;top:864.00px;font-size:12px;line-height:14px;color:#000;font-weight:bold;transform:scaleX(0.9476);transform-origin:left center;">Frequencies</span><svg class="a" style="left:1271px;top:549px" width="10" height="10" viewBox="0 0 10 10"><path d="M0.9 8.5 L8.5 8.5 L8.5 0.9 Z" fill="#c4c4c4" stroke="#555" stroke-width="1" stroke-linejoin="miter"/></svg><div class="a" style="left:1281px;top:545px;width:216px;height:16px;background:#fbfbfb;border:1px solid #c4c4c4;"></div><div class="a" style="left:1285px;top:548px;width:14px;height:12px;background:#fff;border:1px solid #b6b6b6;border-radius:3px;box-sizing:border-box"></div><svg class="a" style="left:1285px;top:548px" width="14" height="12" viewBox="0 0 14 12"><path d="M2.9000000000000004 3.8 L11.1 3.8 L7.0 8.3 Z" fill="#d0060e"/></svg><span class="t" style="left:1301.60px;top:547.00px;font-size:12px;line-height:14px;color:#000;font-weight:bold;transform:scaleX(0.9844);transform-origin:left center;">Planned Treatment for Period 01</span><div class="a" style="left:1343px;top:573px;width:116px;height:278px;background:#fff;"></div><div class="a" style="left:1343px;top:578px;width:92px;height:132px;background:#b9c9ba;border:1px solid #4b554b;"></div><span class="t" style="left:1297.53px;top:639.00px;font-size:12px;line-height:14px;color:#000;transform:scaleX(0.9568);transform-origin:right center;">Placebo</span><span class="t" style="left:1438.20px;top:639.00px;font-size:9.8px;line-height:11px;color:#000;transform:scaleX(0.9750);transform-origin:left center;">7</span><div class="a" style="left:1343px;top:711px;width:66px;height:133px;background:#b9c9ba;border:1px solid #4b554b;"></div><span class="t" style="left:1300.21px;top:772.00px;font-size:12px;line-height:14px;color:#000;transform:scaleX(0.9536);transform-origin:right center;">NIC .15</span><span class="t" style="left:1411.70px;top:773.00px;font-size:9.8px;line-height:11px;color:#000;transform:scaleX(0.9750);transform-origin:left center;">5</span><div class="a" style="left:1343px;top:573px;width:114px;height:276px;border:1px solid #a6a6a6;"></div><svg class="a" style="left:1287px;top:864px" width="8" height="12" viewBox="0 0 8 12"><path d="M0.6 0.7 L6.5 6 L0.6 11.3 Z" fill="#f6f6f6" stroke="#7e7e7e" stroke-width="1.1"/></svg><div class="a" style="left:1295px;top:862px;width:79px;height:16px;background:#fbfbfb;border:1px solid #c4c4c4;"></div><span class="t" style="left:1298.00px;top:864.00px;font-size:12px;line-height:14px;color:#000;font-weight:bold;transform:scaleX(0.9476);transform-origin:left center;">Frequencies</span><svg class="a" style="left:1508px;top:549px" width="10" height="10" viewBox="0 0 10 10"><path d="M0.9 8.5 L8.5 8.5 L8.5 0.9 Z" fill="#c4c4c4" stroke="#555" stroke-width="1" stroke-linejoin="miter"/></svg><div class="a" style="left:1518px;top:545px;width:162px;height:16px;background:#fbfbfb;border:1px solid #c4c4c4;"></div><div class="a" style="left:1522px;top:548px;width:14px;height:12px;background:#fff;border:1px solid #b6b6b6;border-radius:3px;box-sizing:border-box"></div><svg class="a" style="left:1522px;top:548px" width="14" height="12" viewBox="0 0 14 12"><path d="M2.9000000000000004 3.8 L11.1 3.8 L7.0 8.3 Z" fill="#d0060e"/></svg><span class="t" style="left:1537.50px;top:547.00px;font-size:12px;line-height:14px;color:#000;font-weight:bold;transform:scaleX(0.9761);transform-origin:left center;">Country</span><div class="a" style="left:1561px;top:573px;width:116px;height:278px;background:#fff;"></div><div class="a" style="left:1561px;top:578px;width:88px;height:266px;background:#b9c9ba;border:1px solid #4b554b;"></div><span class="t" style="left:1534.21px;top:705.00px;font-size:12px;line-height:14px;color:#000;transform:scaleX(0.9033);transform-origin:right center;">USA</span><span class="t" style="left:1652.20px;top:706.00px;font-size:9.8px;line-height:11px;color:#000;transform:scaleX(0.9750);transform-origin:left center;">12</span><div class="a" style="left:1561px;top:573px;width:114px;height:276px;border:1px solid #a6a6a6;"></div><svg class="a" style="left:1524px;top:864px" width="8" height="12" viewBox="0 0 8 12"><path d="M0.6 0.7 L6.5 6 L0.6 11.3 Z" fill="#f6f6f6" stroke="#7e7e7e" stroke-width="1.1"/></svg><div class="a" style="left:1532px;top:862px;width:79px;height:16px;background:#fbfbfb;border:1px solid #c4c4c4;"></div><span class="t" style="left:1535.00px;top:864.00px;font-size:12px;line-height:14px;color:#000;font-weight:bold;transform:scaleX(0.9476);transform-origin:left center;">Frequencies</span><svg class="a" style="left:296px;top:882px" width="8" height="12" viewBox="0 0 8 12"><path d="M0.6 0.7 L6.5 6 L0.6 11.3 Z" fill="#f6f6f6" stroke="#7e7e7e" stroke-width="1.1"/></svg><div class="a" style="left:304px;top:880px;width:133px;height:16px;background:#fbfbfb;border:1px solid #c4c4c4;"></div><span class="t" style="left:306.80px;top:882.00px;font-size:12px;line-height:14px;color:#000;font-weight:bold;transform:scaleX(0.9541);transform-origin:left center;">VS Duplicate Records</span><div class="a" style="left:2px;top:942px;width:1719px;height:17px;border:1px solid #000;border-right:none;"></div><span class="t" style="left:1647.30px;top:944.00px;font-size:12px;line-height:14px;color:#000;transform:scaleX(1.0261);transform-origin:left center;text-decoration:underline;">Nicardipine</span><svg class="a" style="left:236px;top:0px" width="170" height="90" viewBox="0 0 170 90"><g transform="translate(-236,0)"><rect x="283" y="4" width="115" height="54" rx="11" ry="11" fill="#e8f800" stroke="#5620e6" stroke-width="4"/><path d="M293.8 59.7 L241.1 81.3 L241.1 85.3 L242.4 85.3 L333.8 59.9 L333.8 57 L293.8 57 Z" fill="#5620e6"/><path d="M310.1 55.5 L277.5 71.4 L333.8 56.1 L333.8 55.5 Z" fill="#e8f800"/></g></svg><span class="t" style="left:292.62px;top:8.00px;font-size:19px;line-height:21px;color:#5126e0;font-weight:bold;transform:scaleX(1.0090);transform-origin:center center;">Drill Down</span><span class="t" style="left:303.62px;top:30.00px;font-size:19px;line-height:21px;color:#5126e0;font-weight:bold;transform:scaleX(1.0116);transform-origin:center center;">Buttons</span>

</body></html>
